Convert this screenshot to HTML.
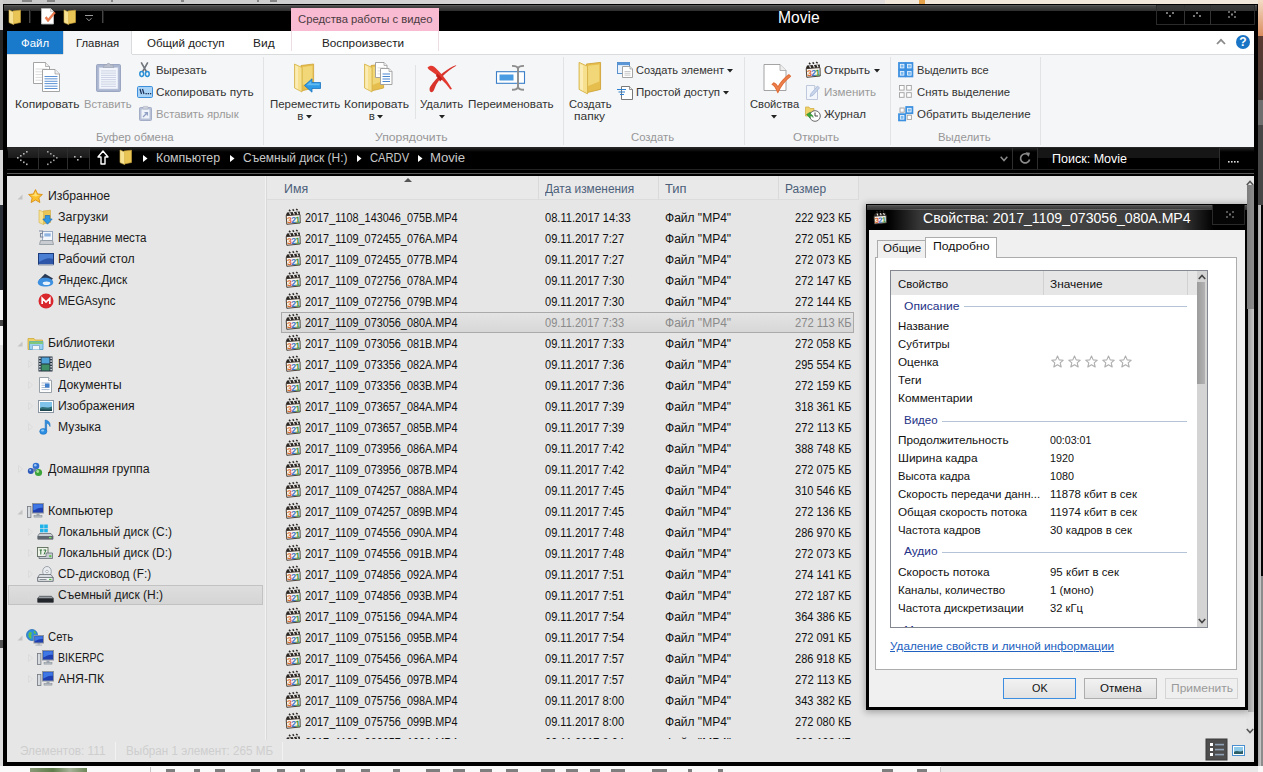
<!DOCTYPE html>
<html lang="ru"><head><meta charset="utf-8"><title>Movie</title>
<style>
html,body{margin:0;padding:0}
body{width:1263px;height:772px;overflow:hidden;position:relative;background:#e6e6e6;font-family:"Liberation Sans", sans-serif;font-size:12px}
div,svg,span.t{position:absolute;box-sizing:border-box}
span.t{white-space:pre;transform-origin:0 50%}
svg{overflow:visible}
svg text{font-family:"Liberation Sans", sans-serif}
</style></head><body>
<div style="left:0px;top:0px;width:885px;height:5px;background:linear-gradient(90deg,#c8c8c8,#d6d4d4 60%,#e2dcdc)"></div>
<div style="left:885px;top:0px;width:378px;height:5px;background:#f1e7da"></div>
<div style="left:919px;top:0px;width:6px;height:4px;background:#e6a24a"></div>
<div style="left:1258px;top:0px;width:5px;height:36px;background:linear-gradient(#f3dcc6,#d98d5e)"></div>
<div style="left:1258px;top:36px;width:5px;height:64px;background:linear-gradient(#5a3a30,#453a36)"></div>
<div style="left:1258px;top:100px;width:5px;height:25px;background:#6e6e6e"></div>
<div style="left:1258px;top:125px;width:5px;height:80px;background:#464646"></div>
<div style="left:1258px;top:205px;width:5px;height:567px;background:#050505"></div>
<div style="left:1258px;top:205px;width:3px;height:561px;background:linear-gradient(90deg,#a8a8a8,#cacaca)"></div>
<div style="left:1261px;top:576px;width:2px;height:196px;background:#8c8c8c"></div>
<div style="left:0px;top:0px;width:3px;height:30px;background:#cfcfcf"></div>
<div style="left:0px;top:30px;width:3px;height:120px;background:#262626"></div>
<div style="left:0px;top:150px;width:3px;height:55px;background:#d8d8d8"></div>
<div style="left:0px;top:205px;width:3px;height:85px;background:#2c3038"></div>
<div style="left:0px;top:290px;width:3px;height:55px;background:#f2f2f2"></div>
<div style="left:0px;top:320px;width:3px;height:6px;background:#444"></div>
<div style="left:0px;top:345px;width:3px;height:427px;background:#dedede"></div>
<div style="left:0px;top:640px;width:3px;height:8px;background:#555"></div>
<div style="left:0px;top:766px;width:1263px;height:6px;background:#fafafa"></div>
<div style="left:941px;top:766px;width:317px;height:6px;background:#e9e9e9"></div>
<div style="left:30px;top:768px;width:57px;height:4px;background:linear-gradient(90deg,#8a9a78,#5f7d4a 40%,#a8b39a 70%,#6c8656)"></div>
<div style="left:150px;top:767px;width:1px;height:5px;background:#c4c4c4"></div>
<div style="left:940px;top:767px;width:1px;height:5px;background:#c4c4c4"></div>
<div style="left:166px;top:769px;width:9px;height:3px;background:#555;opacity:0.75"></div>
<div style="left:194px;top:769px;width:6px;height:3px;background:#555;opacity:0.75"></div>
<div style="left:215px;top:769px;width:10px;height:3px;background:#555;opacity:0.75"></div>
<div style="left:251px;top:769px;width:9px;height:3px;background:#555;opacity:0.75"></div>
<div style="left:277px;top:769px;width:8px;height:3px;background:#555;opacity:0.75"></div>
<div style="left:300px;top:769px;width:5px;height:3px;background:#555;opacity:0.75"></div>
<div style="left:336px;top:769px;width:9px;height:3px;background:#555;opacity:0.75"></div>
<div style="left:361px;top:769px;width:9px;height:3px;background:#555;opacity:0.75"></div>
<div style="left:393px;top:769px;width:7px;height:3px;background:#555;opacity:0.75"></div>
<div style="left:426px;top:769px;width:14px;height:3px;background:#555;opacity:0.75"></div>
<div style="left:453px;top:769px;width:12px;height:3px;background:#555;opacity:0.75"></div>
<div style="left:480px;top:769px;width:12px;height:3px;background:#555;opacity:0.75"></div>
<div style="left:506px;top:769px;width:12px;height:3px;background:#555;opacity:0.75"></div>
<div style="left:541px;top:769px;width:14px;height:3px;background:#555;opacity:0.75"></div>
<div style="left:566px;top:769px;width:12px;height:3px;background:#555;opacity:0.75"></div>
<div style="left:590px;top:769px;width:10px;height:3px;background:#555;opacity:0.75"></div>
<div style="left:611px;top:769px;width:14px;height:3px;background:#555;opacity:0.75"></div>
<div style="left:652px;top:769px;width:15px;height:3px;background:#555;opacity:0.75"></div>
<div style="left:688px;top:769px;width:4px;height:3px;background:#555;opacity:0.75"></div>
<div style="left:718px;top:769px;width:5px;height:3px;background:#555;opacity:0.75"></div>
<div style="left:882px;top:769px;width:11px;height:3px;background:#555;opacity:0.75"></div>
<div style="left:917px;top:769px;width:10px;height:3px;background:#555;opacity:0.75"></div>
<div style="left:22px;top:0px;width:10px;height:2px;background:#666;opacity:0.7"></div>
<div style="left:47px;top:0px;width:8px;height:2px;background:#666;opacity:0.7"></div>
<div style="left:111px;top:0px;width:2px;height:2px;background:#666;opacity:0.7"></div>
<div style="left:181px;top:0px;width:3px;height:2px;background:#666;opacity:0.7"></div>
<div style="left:257px;top:0px;width:2px;height:2px;background:#666;opacity:0.7"></div>
<div style="left:270px;top:0px;width:7px;height:2px;background:#666;opacity:0.7"></div>
<div style="left:3px;top:4px;width:1255px;height:762px;background:#000"></div>
<div style="left:4px;top:5px;width:1253px;height:6px;background:linear-gradient(#484848,#2e2e2e);border-top:1px solid #5a5a5a"></div>
<div style="left:1156px;top:5px;width:99px;height:20px;background:linear-gradient(#3c3c3c 0,#333 30%,#000 32%,#000 100%);border:1px solid #2b2b2b;border-top:0"></div>
<div style="left:1184px;top:5px;width:1px;height:20px;background:#333"></div>
<div style="left:1210px;top:5px;width:1px;height:20px;background:#333"></div>
<svg style="left:1166px;top:12px;" width="8" height="5" viewBox="0 0 8 5"><rect x="0" y="0" width="2" height="2" fill="#777"/><rect x="6" y="0" width="2" height="2" fill="#777"/><rect x="3" y="3" width="2" height="2" fill="#777"/></svg>
<svg style="left:1193px;top:12px;" width="8" height="5" viewBox="0 0 8 5"><rect x="3" y="0" width="2" height="2" fill="#777"/><rect x="0" y="3" width="2" height="2" fill="#777"/><rect x="6" y="3" width="2" height="2" fill="#777"/></svg>
<svg style="left:1228px;top:11px;" width="8" height="7" viewBox="0 0 8 7"><rect x="0" y="0" width="2" height="2" fill="#666"/><rect x="6" y="0" width="2" height="2" fill="#666"/><rect x="3" y="2.5" width="2" height="2" fill="#888"/><rect x="0" y="5" width="2" height="2" fill="#666"/><rect x="6" y="5" width="2" height="2" fill="#666"/></svg>
<span class="t" style="left:778.20px;top:7px;font-size:16px;line-height:22px;color:#fff;transform:scaleX(0.9745);">Movie</span>
<svg style="left:7.5px;top:9px;" width="14" height="16" viewBox="0 0 14 16"><path d="M5 2 L12.5 1.2 L12.5 13.5 L5 15Z" fill="#e9c556" stroke="#cfa63a" stroke-width="0.6"/><path d="M1 1 L5.6 3 L5.6 15.6 L1 13.6Z" fill="#f6e292" stroke="#d6b248" stroke-width="0.6"/></svg>
<div style="left:29px;top:10px;width:2px;height:13px;background:#1e1e1e;border-left:1px solid #444"></div>
<svg style="left:41px;top:8px;" width="15" height="17" viewBox="0 0 15 17"><path d="M0.5 0.5 H9.5 L12.5 3.5 V16.0 H0.5Z" fill="#fff" stroke="#bbb" stroke-width="0.9"/><path d="M9.5 0.5 V3.5 H12.5" fill="#eee" stroke="#bbb" stroke-width="0.7"/><path d="M4 10 L7 14 L14.5 5 L13 3.8 L7.2 10.8 L5.5 8.6Z" fill="#ee7b4d" stroke="#d3602f" stroke-width="0.4"/></svg>
<svg style="left:62.5px;top:9px;" width="14" height="16" viewBox="0 0 14 16"><path d="M5 2 L12.5 1.2 L12.5 13.5 L5 15Z" fill="#e9c556" stroke="#cfa63a" stroke-width="0.6"/><path d="M1 1 L5.6 3 L5.6 15.6 L1 13.6Z" fill="#f6e292" stroke="#d6b248" stroke-width="0.6"/></svg>
<svg style="left:85px;top:15px;" width="8" height="7" viewBox="0 0 8 7"><rect x="0" y="0" width="8" height="1" fill="#9a9a9a"/><path d="M1.5 3.2 L4 5.8 L6.5 3.2" fill="none" stroke="#9a9a9a" stroke-width="1"/></svg>
<div style="left:102px;top:10px;width:2px;height:13px;background:#1e1e1e;border-left:1px solid #444"></div>
<div style="left:7px;top:31px;width:1247px;height:23px;background:#fff"></div>
<div style="left:7px;top:31px;width:56px;height:23px;background:#1979ca"></div>
<span class="t" style="left:20.50px;top:34px;font-size:11.5px;line-height:18px;color:#fff;transform:scaleX(0.9936);">Файл</span>
<div style="left:63px;top:31px;width:69px;height:24px;background:#f5f6f7;border:1px solid #dadbdc;border-bottom:0;border-top:0"></div>
<span class="t" style="left:76.20px;top:34px;font-size:11.5px;line-height:18px;color:#222;transform:scaleX(0.9844);">Главная</span>
<span class="t" style="left:146.70px;top:34px;font-size:11.5px;line-height:18px;color:#222;transform:scaleX(1.0043);">Общий доступ</span>
<span class="t" style="left:253.20px;top:34px;font-size:11.5px;line-height:18px;color:#222;transform:scaleX(1.0378);">Вид</span>
<div style="left:291px;top:8px;width:148px;height:23px;background:#f8bbd2"></div>
<span class="t" style="left:297.70px;top:10px;font-size:11.5px;line-height:18px;color:#4a3a40;transform:scaleX(0.9798);">Средства работы с видео</span>
<div style="left:291px;top:31px;width:1px;height:20px;background:#ecdde3"></div>
<div style="left:438px;top:31px;width:1px;height:20px;background:#ecdde3"></div>
<span class="t" style="left:322.20px;top:34px;font-size:11.5px;line-height:18px;color:#222;transform:scaleX(1.0217);">Воспроизвести</span>
<svg style="left:1216px;top:38px;" width="10" height="7" viewBox="0 0 10 7"><path d="M1 6 L5 1.8 L9 6" fill="none" stroke="#8a8a8a" stroke-width="1.8"/></svg>
<svg style="left:1236px;top:35px;" width="14" height="14" viewBox="0 0 14 14"><circle cx="7" cy="7" r="7" fill="#1a74c6"/><text x="7" y="11.2" font-size="12" font-weight="bold" text-anchor="middle" fill="#fff">?</text></svg>
<div style="left:7px;top:54px;width:1247px;height:93px;background:#f5f6f7;border-top:1px solid #dadbdc"></div>
<div style="left:63px;top:54px;width:69px;height:1px;background:#f5f6f7"></div>
<div style="left:263px;top:57px;width:1px;height:88px;background:#e2e3e4"></div>
<div style="left:563px;top:57px;width:1px;height:88px;background:#e2e3e4"></div>
<div style="left:744px;top:57px;width:1px;height:88px;background:#e2e3e4"></div>
<div style="left:890px;top:57px;width:1px;height:88px;background:#e2e3e4"></div>
<div style="left:1040px;top:57px;width:1px;height:88px;background:#e2e3e4"></div>
<div style="left:415px;top:65px;width:1px;height:54px;background:#e2e3e4"></div>
<svg style="left:33px;top:62px;" width="28" height="30" viewBox="0 0 28 30"><path d="M0.5 0.5 H12.5 L16.5 4.5 V21.5 H0.5Z" fill="#fff" stroke="#9a9a9a" stroke-width="0.9"/><path d="M12.5 0.5 V4.5 H16.5" fill="#eee" stroke="#9a9a9a" stroke-width="0.7"/><rect x="2.5" y="6.5" width="12" height="1" fill="#dcdcdc"/><rect x="2.5" y="9.3" width="12" height="1" fill="#dcdcdc"/><rect x="2.5" y="12.1" width="12" height="1" fill="#dcdcdc"/><rect x="2.5" y="14.9" width="12" height="1" fill="#dcdcdc"/><rect x="2.5" y="17.7" width="12" height="1" fill="#dcdcdc"/><path d="M9.5 7.5 H22.0 L26.5 12.0 V29.5 H9.5Z" fill="#fff" stroke="#9a9a9a" stroke-width="0.9"/><path d="M22.0 7.5 V12.0 H26.5" fill="#eee" stroke="#9a9a9a" stroke-width="0.7"/><rect x="11.5" y="14.0" width="13" height="0.9" fill="#4a86cf"/><rect x="11.5" y="16.4" width="13" height="0.9" fill="#4a86cf"/><rect x="11.5" y="18.8" width="13" height="0.9" fill="#4a86cf"/><rect x="11.5" y="21.2" width="13" height="0.9" fill="#4a86cf"/><rect x="11.5" y="23.7" width="13" height="0.9" fill="#4a86cf"/><rect x="11.5" y="26.1" width="13" height="0.9" fill="#4a86cf"/></svg>
<span class="t" style="left:14.70px;top:95px;font-size:11.5px;line-height:18px;color:#333;transform:scaleX(1.0433);">Копировать</span>
<svg style="left:96px;top:62px;" width="25" height="30" viewBox="0 0 25 30"><rect x="0.5" y="2.5" width="24" height="27" rx="1.2" fill="#aab5cf" stroke="#9aa6c2"/><rect x="3" y="5.5" width="19" height="21.5" fill="#f2f5fb" stroke="#c5cde0" stroke-width="0.6"/><path d="M7 5.5 L8.5 2.8 H10.8 C11 0.8 14 0.8 14.2 2.8 H16.5 L18 5.5Z" fill="#b9bfcc" stroke="#9aa1b2" stroke-width="0.6"/><rect x="5" y="8.5" width="15" height="0.8" fill="#c3cbe0"/><rect x="5" y="10.7" width="15" height="0.8" fill="#c3cbe0"/><rect x="5" y="12.9" width="15" height="0.8" fill="#c3cbe0"/><rect x="5" y="15.1" width="15" height="0.8" fill="#c3cbe0"/><rect x="5" y="17.3" width="15" height="0.8" fill="#c3cbe0"/><rect x="5" y="19.5" width="15" height="0.8" fill="#c3cbe0"/><rect x="5" y="21.7" width="15" height="0.8" fill="#c3cbe0"/><rect x="5" y="23.9" width="15" height="0.8" fill="#c3cbe0"/></svg>
<span class="t" style="left:83.70px;top:95px;font-size:11.5px;line-height:18px;color:#9a9a9a;transform:scaleX(0.9764);">Вставить</span>
<svg style="left:139px;top:62px;" width="11" height="15" viewBox="0 0 11 15"><path d="M2.2 0.3 L7.6 10 M8.8 0.3 L3.4 10" stroke="#70757e" stroke-width="1.6" fill="none"/><ellipse cx="2.7" cy="12" rx="1.9" ry="2.4" fill="none" stroke="#2b8fd6" stroke-width="1.5"/><ellipse cx="8.3" cy="12" rx="1.9" ry="2.4" fill="none" stroke="#2b8fd6" stroke-width="1.5"/></svg>
<span class="t" style="left:156.20px;top:61px;font-size:11.5px;line-height:18px;color:#333;transform:scaleX(0.9891);">Вырезать</span>
<svg style="left:137px;top:86px;" width="16" height="12" viewBox="0 0 16 12"><rect x="0.5" y="0.5" width="15" height="11" rx="1.2" fill="#a9d3f7" stroke="#3d8fdc"/><path d="M3 3 L4.5 8 M5.5 3 L7 8" stroke="#1c2f55" stroke-width="1.2"/><rect x="8.5" y="7" width="1.3" height="1.3" fill="#1c2f55"/><rect x="10.7" y="7" width="1.3" height="1.3" fill="#1c2f55"/><rect x="12.9" y="7" width="1.3" height="1.3" fill="#1c2f55"/></svg>
<span class="t" style="left:156.20px;top:83px;font-size:11.5px;line-height:18px;color:#333;transform:scaleX(1.0260);">Скопировать путь</span>
<svg style="left:139px;top:106px;" width="13" height="15" viewBox="0 0 13 15"><rect x="0.5" y="1.5" width="12" height="13" rx="1" fill="#b7c0d6" stroke="#a3adc6"/><rect x="2.5" y="3.5" width="8" height="9" fill="#f0f3fa"/><rect x="4" y="0.4" width="5" height="2.6" rx="0.7" fill="#cfd3dd" stroke="#a9afbe" stroke-width="0.6"/><path d="M4 11 L8 7 M5.5 6.6 H8.4 V9.5" stroke="#8fa0c4" stroke-width="1.3" fill="none"/></svg>
<span class="t" style="left:156.20px;top:105px;font-size:11.5px;line-height:18px;color:#9a9a9a;transform:scaleX(0.9811);">Вставить ярлык</span>
<span class="t" style="left:95.70px;top:128px;font-size:11.5px;line-height:18px;color:#979797;transform:scaleX(0.9929);">Буфер обмена</span>
<svg style="left:290px;top:61px;" width="32" height="32" viewBox="0 0 32 32"><path d="M11 4.5 L23.6 3 L23.6 27 L11 30Z" fill="#e6be4e" stroke="#cfa43a" stroke-width="0.8"/><path d="M12.5 6 L22.5 4.8 L22.5 20 L12.5 24Z" fill="#f1d778"/><path d="M4.5 3 L12 6.5 L12 31 L4.5 27Z" fill="#f6e08e" stroke="#d6b248" stroke-width="0.8"/><path d="M5.3 4.5 L8 5.8 L8 28.2 L5.3 26.6Z" fill="#faecb4"/></svg>
<svg style="left:304px;top:78px;" width="17" height="15" viewBox="0 0 17 15"><path d="M0.5 7.5 L8 0.8 L8 4.5 L16.5 4.5 L16.5 10.5 L8 10.5 L8 14.2Z" fill="#2f9be6" stroke="#1b73c0" stroke-width="0.8"/><path d="M2.5 7.3 L7.2 3 L7.2 5.5 L15.5 5.5 L15.5 7.3Z" fill="#63bbf3"/></svg>
<span class="t" style="left:269.70px;top:95px;font-size:11.5px;line-height:18px;color:#333;transform:scaleX(0.9948);">Переместить</span>
<span class="t" style="left:297.20px;top:107px;font-size:11.5px;line-height:18px;color:#333;">в</span>
<svg style="left:306px;top:115px;" width="6" height="4" viewBox="0 0 6 4"><path d="M0 0 H6 L3 3.5Z" fill="#222"/></svg>
<svg style="left:360px;top:61px;" width="32" height="32" viewBox="0 0 32 32"><path d="M11 4.5 L23.6 3 L23.6 27 L11 30Z" fill="#e6be4e" stroke="#cfa43a" stroke-width="0.8"/><path d="M12.5 6 L22.5 4.8 L22.5 20 L12.5 24Z" fill="#f1d778"/><path d="M4.5 3 L12 6.5 L12 31 L4.5 27Z" fill="#f6e08e" stroke="#d6b248" stroke-width="0.8"/><path d="M5.3 4.5 L8 5.8 L8 28.2 L5.3 26.6Z" fill="#faecb4"/></svg>
<svg style="left:375px;top:62px;" width="18" height="23" viewBox="0 0 18 23"><path d="M0.5 0.5 H9.0 L12.0 3.5 V15.5 H0.5Z" fill="#fff" stroke="#9a9a9a" stroke-width="0.9"/><path d="M9.0 0.5 V3.5 H12.0" fill="#eee" stroke="#9a9a9a" stroke-width="0.7"/><rect x="2.5" y="5.5" width="7.5" height="0.8" fill="#d4d4d4"/><rect x="2.5" y="8.5" width="7.5" height="0.8" fill="#d4d4d4"/><rect x="2.5" y="11.5" width="7.5" height="0.8" fill="#d4d4d4"/><path d="M5.5 6.5 H14.0 L17.0 9.5 V22.5 H5.5Z" fill="#fff" stroke="#9a9a9a" stroke-width="0.9"/><path d="M14.0 6.5 V9.5 H17.0" fill="#eee" stroke="#9a9a9a" stroke-width="0.7"/><rect x="7.5" y="11.5" width="7.5" height="1" fill="#4a86cf"/><rect x="7.5" y="14.0" width="7.5" height="1" fill="#4a86cf"/><rect x="7.5" y="16.5" width="7.5" height="1" fill="#4a86cf"/><rect x="7.5" y="19.0" width="7.5" height="1" fill="#4a86cf"/></svg>
<span class="t" style="left:343.70px;top:95px;font-size:11.5px;line-height:18px;color:#333;transform:scaleX(1.0513);">Копировать</span>
<span class="t" style="left:368.70px;top:107px;font-size:11.5px;line-height:18px;color:#333;">в</span>
<svg style="left:377px;top:115px;" width="6" height="4" viewBox="0 0 6 4"><path d="M0 0 H6 L3 3.5Z" fill="#222"/></svg>
<svg style="left:427px;top:64.5px;" width="30" height="28" viewBox="0 0 30 28"><path d="M29 0.3 C22 2.5 10 11 3 22 C2 24.5 2.5 27 4.5 27.3 C6.5 27 7 25 8 22.5 C11 15 19 6.5 29.3 0.8Z" fill="#d8342c"/><path d="M0.5 2.5 C3 0.3 5 0.3 7.5 2 C13 7 20 15 25 24 L23.3 24.6 C18 17 11 10.5 4 6 C2.5 5 1 4 0.5 2.5Z" fill="#e23a30"/><path d="M10 8.5 C12 10 14 12 15.5 14 L13 16.5 C12 14.5 10.5 12.5 9 11Z" fill="#c41f1a"/></svg>
<span class="t" style="left:420.20px;top:95px;font-size:11.5px;line-height:18px;color:#333;transform:scaleX(0.9816);">Удалить</span>
<svg style="left:439px;top:115px;" width="6" height="4" viewBox="0 0 6 4"><path d="M0 0 H6 L3 3.5Z" fill="#222"/></svg>
<svg style="left:495.5px;top:64.5px;" width="30" height="26" viewBox="0 0 30 26"><rect x="0.5" y="6.7" width="28" height="11.6" fill="#fff" stroke="#3a7fc8" stroke-width="1.1"/><rect x="3.5" y="9.5" width="14" height="6" fill="#4a9ce2"/><path d="M16 0.9 C19.5 0.9 22 1.8 22 4 V21.5 C22 23.8 19.5 24.8 16 24.8 M28 0.9 C24.5 0.9 22 1.8 22 4 M22 21.5 C22 23.8 24.5 24.8 28 24.8" fill="none" stroke="#8d8d8d" stroke-width="1.9"/></svg>
<span class="t" style="left:467.70px;top:95px;font-size:11.5px;line-height:18px;color:#333;transform:scaleX(1.0153);">Переименовать</span>
<span class="t" style="left:375.20px;top:128px;font-size:11.5px;line-height:18px;color:#979797;transform:scaleX(1.0608);">Упорядочить</span>
<svg style="left:573.8px;top:58.7px;" width="36" height="36" viewBox="0 0 32 32"><path d="M11 4.5 L23.6 3 L23.6 27 L11 30Z" fill="#e6be4e" stroke="#cfa43a" stroke-width="0.8"/><path d="M12.5 6 L22.5 4.8 L22.5 20 L12.5 24Z" fill="#f1d778"/><path d="M4.5 3 L12 6.5 L12 31 L4.5 27Z" fill="#f6e08e" stroke="#d6b248" stroke-width="0.8"/><path d="M5.3 4.5 L8 5.8 L8 28.2 L5.3 26.6Z" fill="#faecb4"/></svg>
<span class="t" style="left:568.70px;top:95px;font-size:11.5px;line-height:18px;color:#333;transform:scaleX(0.9744);">Создать</span>
<span class="t" style="left:574.20px;top:107px;font-size:11.5px;line-height:18px;color:#333;transform:scaleX(1.0448);">папку</span>
<svg style="left:617px;top:62px;" width="16" height="16" viewBox="0 0 16 16"><rect x="0.5" y="0.5" width="12" height="11" fill="#eaf2fb" stroke="#4a86c7" stroke-width="0.9"/><rect x="0.5" y="0.5" width="12" height="2.6" fill="#5b96d6"/><path d="M5.5 4.5 H13.0 L15.5 7.0 V15.5 H5.5Z" fill="#fff" stroke="#9a9a9a" stroke-width="0.9"/><path d="M13.0 4.5 V7.0 H15.5" fill="#eee" stroke="#9a9a9a" stroke-width="0.7"/><rect x="7.5" y="9.0" width="6" height="0.8" fill="#bbb"/><rect x="7.5" y="10.8" width="6" height="0.8" fill="#bbb"/><rect x="7.5" y="12.7" width="6" height="0.8" fill="#bbb"/></svg>
<span class="t" style="left:636.20px;top:61px;font-size:11.5px;line-height:18px;color:#333;transform:scaleX(0.9623);">Создать элемент</span>
<svg style="left:727px;top:69px;" width="6" height="4" viewBox="0 0 6 4"><path d="M0 0 H6 L3 3.5Z" fill="#222"/></svg>
<svg style="left:617px;top:84px;" width="16" height="16" viewBox="0 0 16 16"><path d="M4.5 2.5 H12.5 L15.5 5.5 V15.5 H4.5Z" fill="#fff" stroke="#6a6a6a" stroke-width="0.9"/><path d="M12.5 2.5 V5.5 H15.5" fill="#eee" stroke="#6a6a6a" stroke-width="0.7"/><path d="M0 5.5 H9 M1.5 8 H8 M3 10.5 H7" stroke="#2d7fd0" stroke-width="1.1"/></svg>
<span class="t" style="left:636.20px;top:83px;font-size:11.5px;line-height:18px;color:#333;transform:scaleX(0.9988);">Простой доступ</span>
<svg style="left:723px;top:91px;" width="6" height="4" viewBox="0 0 6 4"><path d="M0 0 H6 L3 3.5Z" fill="#222"/></svg>
<span class="t" style="left:630.70px;top:128px;font-size:11.5px;line-height:18px;color:#979797;transform:scaleX(0.9858);">Создать</span>
<svg style="left:763px;top:63px;" width="29" height="31" viewBox="0 0 29 31"><path d="M1 1.5 H17 L23 7.5 V27.5 H1Z" fill="#fff" stroke="#9a9a9a" stroke-width="0.9"/><path d="M17 1.5 V7.5 H23" fill="#eee" stroke="#9a9a9a" stroke-width="0.7"/><path d="M9.2 21.5 C11 22 13 25 14.8 29.6 C18 22 22.5 17 27.5 13.2 L25.8 11.8 C21 15.5 17.5 19.5 15 24 C13.8 21.8 12.3 20.2 10.8 19.8Z" fill="#f0834f" stroke="#e06f3a" stroke-width="1.2" stroke-linejoin="round"/></svg>
<span class="t" style="left:750.20px;top:95px;font-size:11.5px;line-height:18px;color:#333;transform:scaleX(0.9723);">Свойства</span>
<svg style="left:771px;top:115px;" width="6" height="4" viewBox="0 0 6 4"><path d="M0 0 H6 L3 3.5Z" fill="#222"/></svg>
<svg style="left:805px;top:62px;" width="16" height="16" viewBox="0 0 16 16"><path d="M1.2 6.6 L15 5.6 L15.2 14 L1.8 15.3Z" fill="#f7f3ee" stroke="#4a4038" stroke-width="1"/><path d="M0.8 6.6 L2 3.4 L14.8 2.6 L15 5.4Z" fill="#2c2723"/><path d="M4 0.9 L5.4 2.2 M7.6 0.4 L9 1.7 M11.2 0 L12.6 1.3" stroke="#2c2723" stroke-width="1.5"/><path d="M4.5 3.4 L5.6 5.8 M8.3 3.1 L9.4 5.5 M12 2.9 L13.1 5.3" stroke="#efefef" stroke-width="1.2"/><text x="2" y="13.9" font-size="8.6" font-weight="bold" fill="#d8602a" transform="rotate(-3 8 10)">3</text><text x="6.2" y="13.9" font-size="8.6" font-weight="bold" fill="#3a72c8" transform="rotate(-3 8 10)">2</text><text x="10.2" y="13.9" font-size="8.6" font-weight="bold" fill="#3f8f35" transform="rotate(-3 8 10)">1</text></svg>
<span class="t" style="left:824.20px;top:61px;font-size:11.5px;line-height:18px;color:#333;transform:scaleX(1.0205);">Открыть</span>
<svg style="left:874px;top:69px;" width="6" height="4" viewBox="0 0 6 4"><path d="M0 0 H6 L3 3.5Z" fill="#222"/></svg>
<svg style="left:806px;top:84px;" width="14" height="16" viewBox="0 0 14 16"><path d="M0.5 1.5 H8.5 L11.5 4.5 V15.5 H0.5Z" fill="#f3f6fb" stroke="#b9c3d8" stroke-width="0.9"/><path d="M8.5 1.5 V4.5 H11.5" fill="#eee" stroke="#b9c3d8" stroke-width="0.7"/><path d="M4 12.5 L5 9.5 L11.5 2 L13.5 3.8 L7 11.3Z" fill="#c8d4ea" stroke="#9fb1d3" stroke-width="0.7"/></svg>
<span class="t" style="left:824.20px;top:83px;font-size:11.5px;line-height:18px;color:#9a9a9a;transform:scaleX(1.0043);">Изменить</span>
<svg style="left:805px;top:106px;" width="16" height="16" viewBox="0 0 16 16"><path d="M0.5 1 L4 1 L5 2.5 L9 2.5 L9 10 L0.5 10Z" fill="#efd36a" stroke="#cfa93d" stroke-width="0.7"/><circle cx="10" cy="10" r="5.3" fill="#fff" stroke="#6b6b6b" stroke-width="1"/><path d="M10 6.5 V10 H13" stroke="#444" stroke-width="1" fill="none"/><path d="M1.5 8.5 L5.5 6 L5.2 8.2 C7 8.3 8.2 9.6 8.2 11.5 C7.4 10.3 6.5 10 5.1 10.1 L5.3 12.3Z" fill="#3aa83a" stroke="#2a7f2a" stroke-width="0.5"/></svg>
<span class="t" style="left:824.20px;top:105px;font-size:11.5px;line-height:18px;color:#333;transform:scaleX(1.0031);">Журнал</span>
<span class="t" style="left:793.20px;top:128px;font-size:11.5px;line-height:18px;color:#979797;transform:scaleX(1.0205);">Открыть</span>
<svg style="left:898px;top:62px;" width="16" height="16" viewBox="0 0 16 16"><rect x="1" y="1" width="6.2" height="6.2" fill="#fff" stroke="#3c90e0" stroke-width="1.8"/><rect x="2.6" y="2.6" width="3" height="3" fill="#7ab8f0"/><rect x="1" y="8.2" width="6.2" height="6.2" fill="#fff" stroke="#3c90e0" stroke-width="1.8"/><rect x="2.6" y="9.799999999999999" width="3" height="3" fill="#7ab8f0"/><rect x="8.2" y="1" width="6.2" height="6.2" fill="#fff" stroke="#3c90e0" stroke-width="1.8"/><rect x="9.799999999999999" y="2.6" width="3" height="3" fill="#7ab8f0"/><rect x="8.2" y="8.2" width="6.2" height="6.2" fill="#fff" stroke="#3c90e0" stroke-width="1.8"/><rect x="9.799999999999999" y="9.799999999999999" width="3" height="3" fill="#7ab8f0"/></svg>
<span class="t" style="left:916.70px;top:61px;font-size:11.5px;line-height:18px;color:#333;transform:scaleX(0.9627);">Выделить все</span>
<svg style="left:898px;top:84px;" width="16" height="16" viewBox="0 0 16 16"><rect x="1.5" y="1.5" width="4.6" height="4.6" fill="#fff" stroke="#a0a0a0" stroke-width="0.9"/><rect x="1.5" y="8.7" width="4.6" height="4.6" fill="#fff" stroke="#a0a0a0" stroke-width="0.9"/><rect x="8.7" y="1.5" width="4.6" height="4.6" fill="#fff" stroke="#a0a0a0" stroke-width="0.9"/><rect x="8.7" y="8.7" width="4.6" height="4.6" fill="#fff" stroke="#a0a0a0" stroke-width="0.9"/></svg>
<span class="t" style="left:916.70px;top:83px;font-size:11.5px;line-height:18px;color:#333;transform:scaleX(0.9829);">Снять выделение</span>
<svg style="left:898px;top:106px;" width="16" height="16" viewBox="0 0 16 16"><rect x="2" y="2" width="4.2" height="4.2" fill="#fff" stroke="#a0a0a0" stroke-width="0.9"/><rect x="8.2" y="1" width="6.2" height="6.2" fill="#fff" stroke="#3c90e0" stroke-width="1.8"/><rect x="9.799999999999999" y="2.6" width="3" height="3" fill="#7ab8f0"/><rect x="1" y="8.2" width="6.2" height="6.2" fill="#fff" stroke="#3c90e0" stroke-width="1.8"/><rect x="2.6" y="9.799999999999999" width="3" height="3" fill="#7ab8f0"/><rect x="9.2" y="9.2" width="4.2" height="4.2" fill="#fff" stroke="#a0a0a0" stroke-width="0.9"/></svg>
<span class="t" style="left:916.70px;top:105px;font-size:11.5px;line-height:18px;color:#333;transform:scaleX(1.0001);">Обратить выделение</span>
<span class="t" style="left:938.20px;top:128px;font-size:11.5px;line-height:18px;color:#979797;transform:scaleX(0.9913);">Выделить</span>
<div style="left:7px;top:147px;width:1247px;height:29px;background:#000"></div>
<div style="left:7px;top:147px;width:1247px;height:5px;background:linear-gradient(#2a2a2a,#000)"></div>
<div style="left:8px;top:148px;width:81px;height:10px;background:linear-gradient(#2a2a2a,#1a1a1a)"></div>
<div style="left:7px;top:169px;width:1247px;height:1px;background:#222"></div>
<div style="left:1038px;top:148px;width:181px;height:10px;background:#161616"></div>
<div style="left:7px;top:173px;width:1247px;height:1px;background:#5a5a5a"></div>
<div style="left:38px;top:148px;width:1px;height:21px;background:#2e2e2e"></div>
<div style="left:67px;top:148px;width:1px;height:21px;background:#2e2e2e"></div>
<div style="left:89px;top:148px;width:1px;height:21px;background:#2e2e2e"></div>
<div style="left:1012px;top:148px;width:1px;height:21px;background:#2e2e2e"></div>
<div style="left:1037px;top:148px;width:1px;height:21px;background:#2e2e2e"></div>
<div style="left:1219px;top:148px;width:1px;height:21px;background:#2e2e2e"></div>
<svg style="left:17px;top:151px;" width="13" height="15" viewBox="0 0 13 15"><rect x="9" y="0" width="1.6" height="1.6" fill="#b4b4b4"/><rect x="6" y="2" width="1.6" height="1.6" fill="#b4b4b4"/><rect x="3" y="4" width="1.6" height="1.6" fill="#b4b4b4"/><rect x="0" y="6" width="1.6" height="1.6" fill="#b4b4b4"/><rect x="3" y="8.5" width="1.6" height="1.6" fill="#b4b4b4"/><rect x="6" y="10.5" width="1.6" height="1.6" fill="#b4b4b4"/><rect x="9" y="12.5" width="1.6" height="1.6" fill="#b4b4b4"/></svg>
<svg style="left:47px;top:151px;" width="13" height="15" viewBox="0 0 13 15"><rect x="0" y="0" width="1.6" height="1.6" fill="#a0a0a0"/><rect x="3" y="2" width="1.6" height="1.6" fill="#a0a0a0"/><rect x="6" y="4" width="1.6" height="1.6" fill="#a0a0a0"/><rect x="9" y="6" width="1.6" height="1.6" fill="#a0a0a0"/><rect x="6" y="8.5" width="1.6" height="1.6" fill="#a0a0a0"/><rect x="3" y="10.5" width="1.6" height="1.6" fill="#a0a0a0"/><rect x="0" y="12.5" width="1.6" height="1.6" fill="#a0a0a0"/></svg>
<svg style="left:74px;top:156px;" width="10" height="6" viewBox="0 0 10 6"><rect x="0" y="0" width="1.6" height="1.6" fill="#b4b4b4"/><rect x="3" y="3" width="1.6" height="1.6" fill="#b4b4b4"/><rect x="6" y="0" width="1.6" height="1.6" fill="#b4b4b4"/></svg>
<svg style="left:97px;top:150px;" width="12" height="15" viewBox="0 0 12 15"><path d="M6 1 L11 7 H8 V14 H4 V7 H1Z" fill="#000" stroke="#fff" stroke-width="1.4" stroke-linejoin="round"/></svg>
<svg style="left:119px;top:149px;" width="14" height="16" viewBox="0 0 14 16"><path d="M5 2 L12.5 1.2 L12.5 13.5 L5 15Z" fill="#e9c556" stroke="#cfa63a" stroke-width="0.6"/><path d="M1 1 L5.6 3 L5.6 15.6 L1 13.6Z" fill="#f6e292" stroke="#d6b248" stroke-width="0.6"/></svg>
<svg style="left:142.5px;top:155px;" width="5" height="7" viewBox="0 0 5 7"><path d="M0 0 L4.5 3.5 L0 7Z" fill="#fff"/></svg>
<span class="t" style="left:156.20px;top:149px;font-size:12px;line-height:18px;color:#c8c8c8;transform:scaleX(1.0321);">Компьютер</span>
<svg style="left:230px;top:155px;" width="5" height="7" viewBox="0 0 5 7"><path d="M0 0 L4.5 3.5 L0 7Z" fill="#fff"/></svg>
<span class="t" style="left:242.70px;top:149px;font-size:12px;line-height:18px;color:#c8c8c8;transform:scaleX(0.9993);">Съемный диск (H:)</span>
<svg style="left:357px;top:155px;" width="5" height="7" viewBox="0 0 5 7"><path d="M0 0 L4.5 3.5 L0 7Z" fill="#fff"/></svg>
<span class="t" style="left:370.20px;top:149px;font-size:12px;line-height:18px;color:#c8c8c8;transform:scaleX(0.9306);">CARDV</span>
<svg style="left:418px;top:155px;" width="5" height="7" viewBox="0 0 5 7"><path d="M0 0 L4.5 3.5 L0 7Z" fill="#fff"/></svg>
<span class="t" style="left:430.20px;top:149px;font-size:12px;line-height:18px;color:#c8c8c8;transform:scaleX(1.0963);">Movie</span>
<svg style="left:1000px;top:156px;" width="8" height="6" viewBox="0 0 8 6"><path d="M0.7 0.7 L4 4.5 L7.3 0.7" fill="none" stroke="#8a8a8a" stroke-width="1.5"/></svg>
<svg style="left:1019px;top:152px;" width="12" height="13" viewBox="0 0 12 13"><path d="M9.5 3.2 A4.6 4.6 0 1 0 10.6 7.5" fill="none" stroke="#8a8a8a" stroke-width="1.7"/><path d="M6.5 0.2 L11 0.8 L9.8 5Z" fill="#8a8a8a"/></svg>
<span class="t" style="left:1051.70px;top:150px;font-size:12.5px;line-height:18px;color:#fff;transform:scaleX(1.0022);">Поиск: Movie</span>
<svg style="left:1228px;top:161px;" width="12" height="2" viewBox="0 0 12 2"><rect x="0" y="0" width="1.6" height="1.6" fill="#ddd"/><rect x="3" y="0" width="1.6" height="1.6" fill="#ddd"/><rect x="6" y="0" width="1.6" height="1.6" fill="#ddd"/><rect x="9" y="0" width="1.6" height="1.6" fill="#ddd"/></svg>
<div style="left:7px;top:176px;width:1247px;height:586px;background:#e6e6e6"></div>
<div style="left:265px;top:176px;width:1px;height:564px;background:#f2f2f2"></div>
<div style="left:266px;top:176px;width:1px;height:564px;background:#d9d9d9"></div>
<svg style="left:17px;top:194px;" width="6" height="6" viewBox="0 0 6 6"><path d="M5.5 0.5 V5.5 H0.5Z" fill="#c4c4c4"/></svg>
<svg style="left:27.5px;top:189.0px;" width="15" height="14" viewBox="0 0 15 14"><path d="M7.5 0.6 L9.6 5 L14.4 5.5 L10.8 8.8 L11.9 13.5 L7.5 11 L3.1 13.5 L4.2 8.8 L0.6 5.5 L5.4 5Z" fill="#fbc12e" stroke="#d98f14" stroke-width="0.9" stroke-linejoin="round"/><path d="M7.5 2.8 L8.9 5.9 L12 6.3 L7.5 7.5 L3 6.3 L6.1 5.9Z" fill="#ffe27a"/></svg>
<span class="t" style="left:47.70px;top:187px;font-size:12px;line-height:18px;color:#1a1a1a;transform:scaleX(1.0209);">Избранное</span>
<svg style="left:38.0px;top:209.0px;" width="15" height="16" viewBox="0 0 15 16"><path d="M5 2 L12.5 1.2 L12.5 13.5 L5 15Z" fill="#e9c556" stroke="#cfa63a" stroke-width="0.6"/><path d="M1 1 L5.6 3 L5.6 15.6 L1 13.6Z" fill="#f6e292" stroke="#d6b248" stroke-width="0.6"/><path d="M7.2 6.5 H11.8 V10 H14.2 L9.5 15.2 L4.8 10 H7.2Z" fill="#2f96e4" stroke="#1a6fbe" stroke-width="0.7"/></svg>
<span class="t" style="left:57.70px;top:208px;font-size:12px;line-height:18px;color:#1a1a1a;transform:scaleX(1.0373);">Загрузки</span>
<svg style="left:37.5px;top:230.0px;" width="16" height="16" viewBox="0 0 16 16"><rect x="4.5" y="1.5" width="10" height="9" fill="#f4f7fb" stroke="#8ea2bf" stroke-width="0.9"/><rect x="6.3" y="3.3" width="6.4" height="3.2" fill="#8fb4e2"/><path d="M1 1 H4.5 V3.5 H2.5 V7 H5.5" fill="none" stroke="#7d8aa0" stroke-width="1.1"/><path d="M2.5 10.5 H14.5 L15.5 14.5 H1.5Z" fill="#c9cdd2" stroke="#8d949c" stroke-width="0.8"/></svg>
<span class="t" style="left:57.70px;top:229px;font-size:12px;line-height:18px;color:#1a1a1a;transform:scaleX(0.9690);">Недавние места</span>
<svg style="left:37.5px;top:252.5px;" width="16" height="13" viewBox="0 0 16 13"><rect x="0.5" y="0.5" width="15" height="11" fill="#2d55a8" stroke="#1d3a7a"/><path d="M1 1 H15 V6 C10 4 5 7 1 9Z" fill="#4a7fd4"/><rect x="0.5" y="11" width="15" height="1.6" fill="#9aa4b8"/></svg>
<span class="t" style="left:57.70px;top:250px;font-size:12px;line-height:18px;color:#1a1a1a;transform:scaleX(1.0169);">Рабочий стол</span>
<svg style="left:37.0px;top:273.0px;" width="17" height="14" viewBox="0 0 17 14"><path d="M2 7 L8 0.8 L16 5.5 L13 9Z" fill="#2a3a55"/><path d="M0.8 9.5 C0.8 6.5 4 4.8 8 4.8 C12.5 4.8 16.2 6.8 16.2 9.5 C16.2 12.3 12.5 13.6 8.5 13.6 C4 13.6 0.8 12.3 0.8 9.5Z" fill="#3d8fe0"/><ellipse cx="9.5" cy="10.2" rx="3.8" ry="1.8" fill="#e8f2fc"/></svg>
<span class="t" style="left:57.70px;top:271px;font-size:12px;line-height:18px;color:#1a1a1a;transform:scaleX(0.9902);">Яндекс.Диск</span>
<svg style="left:37.5px;top:293.0px;" width="16" height="16" viewBox="0 0 16 16"><circle cx="8" cy="8" r="7.5" fill="#d9272e"/><path d="M4.2 11 V5.2 L8 9 L11.8 5.2 V11" fill="none" stroke="#fff" stroke-width="1.7" stroke-linejoin="miter"/></svg>
<span class="t" style="left:57.70px;top:292px;font-size:12px;line-height:18px;color:#1a1a1a;transform:scaleX(0.9598);">MEGAsync</span>
<svg style="left:17px;top:341px;" width="6" height="6" viewBox="0 0 6 6"><path d="M5.5 0.5 V5.5 H0.5Z" fill="#c4c4c4"/></svg>
<svg style="left:26.5px;top:335.5px;" width="17" height="15" viewBox="0 0 17 15"><path d="M1 2.5 H7 L8.2 4 H15.5 V13.5 H1Z" fill="#f0cf62" stroke="#cfa93d" stroke-width="0.8"/><path d="M2.5 5.5 H16 V13.5 H2.5Z" fill="#9ad0f0" stroke="#4d9fd6" stroke-width="0.8"/><path d="M5.5 13.5 V9.5 H12.5 V13.5" fill="#f3f6f8" stroke="#7aa7c8" stroke-width="0.8"/><path d="M2.5 5.5 H16 V8 H2.5Z" fill="#7fc77a"/></svg>
<span class="t" style="left:47.70px;top:334px;font-size:12px;line-height:18px;color:#1a1a1a;transform:scaleX(1.0244);">Библиотеки</span>
<svg style="left:28px;top:360px;" width="5" height="8" viewBox="0 0 5 8"><path d="M0.5 0.5 L4.5 4 L0.5 7.5Z" fill="none" stroke="#dadada" stroke-width="0.9"/></svg>
<svg style="left:38.0px;top:356.0px;" width="15" height="16" viewBox="0 0 15 16"><rect x="0.5" y="0.5" width="14" height="15" fill="#23303f"/><rect x="3.5" y="1.5" width="8" height="6" fill="#4fa3d8"/><rect x="3.5" y="8.5" width="8" height="6" fill="#3f8f66"/><rect x="1.2" y="1.5" width="1.4" height="1.6" fill="#e8edf2"/><rect x="12.4" y="1.5" width="1.4" height="1.6" fill="#e8edf2"/><rect x="1.2" y="4.3" width="1.4" height="1.6" fill="#e8edf2"/><rect x="12.4" y="4.3" width="1.4" height="1.6" fill="#e8edf2"/><rect x="1.2" y="7.1" width="1.4" height="1.6" fill="#e8edf2"/><rect x="12.4" y="7.1" width="1.4" height="1.6" fill="#e8edf2"/><rect x="1.2" y="9.9" width="1.4" height="1.6" fill="#e8edf2"/><rect x="12.4" y="9.9" width="1.4" height="1.6" fill="#e8edf2"/><rect x="1.2" y="12.7" width="1.4" height="1.6" fill="#e8edf2"/><rect x="12.4" y="12.7" width="1.4" height="1.6" fill="#e8edf2"/></svg>
<span class="t" style="left:57.70px;top:355px;font-size:12px;line-height:18px;color:#1a1a1a;transform:scaleX(0.9583);">Видео</span>
<svg style="left:28px;top:381px;" width="5" height="8" viewBox="0 0 5 8"><path d="M0.5 0.5 L4.5 4 L0.5 7.5Z" fill="none" stroke="#dadada" stroke-width="0.9"/></svg>
<svg style="left:39.0px;top:377.0px;" width="13" height="16" viewBox="0 0 13 16"><path d="M0.5 0.5 H9.5 L12.5 3.5 V15.5 H0.5Z" fill="#fff" stroke="#8f979f" stroke-width="0.9"/><path d="M9.5 0.5 V3.5 H12.5" fill="#eee" stroke="#8f979f" stroke-width="0.7"/><rect x="2.5" y="5.5" width="8" height="0.9" fill="#9fb3cc"/><rect x="2.5" y="7.8" width="8" height="0.9" fill="#9fb3cc"/><rect x="2.5" y="10.0" width="8" height="0.9" fill="#9fb3cc"/><rect x="2.5" y="12.2" width="8" height="0.9" fill="#9fb3cc"/><rect x="6" y="6.5" width="4.5" height="4" fill="#3f7fcc"/></svg>
<span class="t" style="left:57.70px;top:376px;font-size:12px;line-height:18px;color:#1a1a1a;transform:scaleX(1.0281);">Документы</span>
<svg style="left:28px;top:402px;" width="5" height="8" viewBox="0 0 5 8"><path d="M0.5 0.5 L4.5 4 L0.5 7.5Z" fill="none" stroke="#dadada" stroke-width="0.9"/></svg>
<svg style="left:37.5px;top:399.5px;" width="16" height="13" viewBox="0 0 16 13"><rect x="0.5" y="0.5" width="15" height="12" fill="#fff" stroke="#8a96a3"/><rect x="2" y="2" width="12" height="9" fill="#7fc3ea"/><path d="M2 8 C5 5.5 8 9 14 6.5 V11 H2Z" fill="#2f6f77"/><path d="M2 9.5 C6 8.5 10 10.5 14 9 V11 H2Z" fill="#1e4750"/></svg>
<span class="t" style="left:57.70px;top:397px;font-size:12px;line-height:18px;color:#1a1a1a;transform:scaleX(1.0156);">Изображения</span>
<svg style="left:28px;top:423px;" width="5" height="8" viewBox="0 0 5 8"><path d="M0.5 0.5 L4.5 4 L0.5 7.5Z" fill="none" stroke="#dadada" stroke-width="0.9"/></svg>
<svg style="left:39.0px;top:419.0px;" width="13" height="16" viewBox="0 0 13 16"><path d="M6.2 12 V1 C9.5 1.5 11.5 3.5 11 7.5 C10.3 5.2 9 4.4 7.6 4.2 V12" fill="#2d8fe2" stroke="#1d6fc0" stroke-width="0.6"/><ellipse cx="4.3" cy="12.4" rx="3.6" ry="2.9" fill="#2d8fe2" stroke="#1d6fc0" stroke-width="0.6"/><ellipse cx="3.6" cy="11.6" rx="1.6" ry="1" fill="#8fcaf7"/></svg>
<span class="t" style="left:57.70px;top:418px;font-size:12px;line-height:18px;color:#1a1a1a;transform:scaleX(1.0152);">Музыка</span>
<svg style="left:18px;top:465px;" width="5" height="8" viewBox="0 0 5 8"><path d="M0.5 0.5 L4.5 4 L0.5 7.5Z" fill="none" stroke="#dadada" stroke-width="0.9"/></svg>
<svg style="left:27.0px;top:461.5px;" width="16" height="15" viewBox="0 0 16 15"><circle cx="9" cy="4" r="3.3" fill="#2f6fd0"/><circle cx="8.3" cy="3.2" r="1.3" fill="#9cc3f2"/><circle cx="3.8" cy="9" r="3" fill="#2a57b8"/><circle cx="3.2" cy="8.2" r="1.1" fill="#8fb4ea"/><circle cx="11.5" cy="10.5" r="3.6" fill="#3ca43a"/><circle cx="10.7" cy="9.5" r="1.4" fill="#a6e09a"/><circle cx="7.5" cy="8" r="1.8" fill="#6b7fb2"/></svg>
<span class="t" style="left:47.70px;top:460px;font-size:12px;line-height:18px;color:#1a1a1a;transform:scaleX(1.0259);">Домашняя группа</span>
<svg style="left:17px;top:509px;" width="6" height="6" viewBox="0 0 6 6"><path d="M5.5 0.5 V5.5 H0.5Z" fill="#c4c4c4"/></svg>
<svg style="left:26.5px;top:503.0px;" width="17" height="16" viewBox="0 0 17 16"><rect x="0.5" y="3.5" width="3.4" height="11" fill="#d7dbe0" stroke="#70777f" stroke-width="0.8"/><rect x="5.5" y="0.5" width="11" height="9.5" fill="#1f3fb0" stroke="#8e959d" stroke-width="1"/><path d="M6.3 1.3 H15.7 V5 C12 4 9 6.5 6.3 7.5Z" fill="#3f78e4"/><rect x="9.5" y="10.5" width="3" height="2" fill="#9aa2ab"/><rect x="7" y="12.5" width="8" height="1.6" fill="#b9c0c8" stroke="#7f868e" stroke-width="0.5"/></svg>
<span class="t" style="left:47.70px;top:502px;font-size:12px;line-height:18px;color:#1a1a1a;transform:scaleX(1.0482);">Компьютер</span>
<svg style="left:28px;top:528px;" width="5" height="8" viewBox="0 0 5 8"><path d="M0.5 0.5 L4.5 4 L0.5 7.5Z" fill="none" stroke="#dadada" stroke-width="0.9"/></svg>
<svg style="left:37.0px;top:524.0px;" width="17" height="16" viewBox="0 0 17 16"><rect x="3" y="0.5" width="3.6" height="3.6" fill="#1fb3ea"/><rect x="7.2" y="0.5" width="3.6" height="3.6" fill="#1fb3ea"/><rect x="3" y="4.7" width="3.6" height="3.6" fill="#1fb3ea"/><rect x="7.2" y="4.7" width="3.6" height="3.6" fill="#1fb3ea"/><path d="M2.5 9.5 H14 L16 12 V15.2 H0.8 V12Z" fill="#c9ced4" stroke="#666d75" stroke-width="0.8"/><rect x="0.8" y="12" width="15.2" height="3.2" fill="#5e666f"/><rect x="12" y="13" width="2.5" height="1.2" fill="#7fe36a"/></svg>
<span class="t" style="left:57.70px;top:523px;font-size:12px;line-height:18px;color:#1a1a1a;transform:scaleX(1.0047);">Локальный диск (C:)</span>
<svg style="left:28px;top:549px;" width="5" height="8" viewBox="0 0 5 8"><path d="M0.5 0.5 L4.5 4 L0.5 7.5Z" fill="none" stroke="#dadada" stroke-width="0.9"/></svg>
<svg style="left:37.0px;top:547.0px;" width="17" height="12" viewBox="0 0 17 12"><rect x="0.5" y="0.5" width="10.5" height="9" fill="#eef3ea" stroke="#5c6b5a" stroke-width="0.9"/><path d="M2.5 3 H5 M3.8 3 V7.5 M6.5 3 H9 L7 7.5" stroke="#2f6f3a" stroke-width="1" fill="none"/><path d="M9 6 H15.5 V11.5 H2 V9.5 H9Z" fill="#c9ced4" stroke="#666d75" stroke-width="0.8"/><rect x="12.2" y="8.2" width="2.2" height="2" fill="#59c44a"/></svg>
<span class="t" style="left:57.70px;top:544px;font-size:12px;line-height:18px;color:#1a1a1a;transform:scaleX(1.0047);">Локальный диск (D:)</span>
<svg style="left:28px;top:570px;" width="5" height="8" viewBox="0 0 5 8"><path d="M0.5 0.5 L4.5 4 L0.5 7.5Z" fill="none" stroke="#dadada" stroke-width="0.9"/></svg>
<svg style="left:37.0px;top:566.0px;" width="17" height="16" viewBox="0 0 17 16"><ellipse cx="10" cy="5.5" rx="4.3" ry="5" fill="#e9edf1" stroke="#8a9199" stroke-width="0.8"/><circle cx="10" cy="5.5" r="1.3" fill="#fff" stroke="#8a9199" stroke-width="0.6"/><path d="M2.5 8.5 H14 L16 11.5 V15.2 H0.8 V11.5Z" fill="#d9dde2" stroke="#666d75" stroke-width="0.8"/><rect x="0.8" y="11.5" width="15.2" height="3.7" fill="#eef0f2" stroke="#666d75" stroke-width="0.8"/><rect x="12" y="12.8" width="2.5" height="1.3" fill="#59c44a"/><rect x="2.5" y="13" width="7" height="0.9" fill="#7d848c"/></svg>
<span class="t" style="left:57.70px;top:565px;font-size:12px;line-height:18px;color:#1a1a1a;transform:scaleX(0.9827);">CD-дисковод (F:)</span>
<div style="left:8px;top:584.5px;width:255px;height:20px;background:linear-gradient(#dedede,#d5d5d5);border:1px solid #c2c2c2"></div>
<svg style="left:28px;top:591px;" width="5" height="8" viewBox="0 0 5 8"><path d="M0.5 0.5 L4.5 4 L0.5 7.5Z" fill="none" stroke="#dadada" stroke-width="0.9"/></svg>
<svg style="left:37.0px;top:591.0px;" width="17" height="8" viewBox="0 0 17 8"><g transform="translate(0,4.5)"><path d="M2.5 0.8 H14.5 L16.3 2.6 V6.8 H0.7 V2.6Z" fill="#9a9fa6" stroke="#3e4349" stroke-width="0.7"/><rect x="0.7" y="2.8" width="15.6" height="4" fill="#23272b"/></g></svg>
<span class="t" style="left:57.70px;top:586px;font-size:12px;line-height:18px;color:#1a1a1a;transform:scaleX(1.0041);">Съемный диск (H:)</span>
<svg style="left:17px;top:635px;" width="6" height="6" viewBox="0 0 6 6"><path d="M5.5 0.5 V5.5 H0.5Z" fill="#c4c4c4"/></svg>
<svg style="left:26.0px;top:628.5px;" width="18" height="17" viewBox="0 0 18 17"><circle cx="6" cy="6" r="5.5" fill="#2f8fdf" stroke="#1b66b0" stroke-width="0.7"/><path d="M3 3.5 C5 2 6.5 4 5.5 5.5 C4.5 7 6.5 8 5 10 C3.5 9.5 1.5 7 3 3.5Z" fill="#5fc04e"/><path d="M8 1.5 C10 2.5 10.5 4.5 9 5 C7.8 4.5 7.5 3 8 1.5Z" fill="#5fc04e"/><rect x="8" y="6.5" width="9.5" height="7.5" fill="#1f3fb0" stroke="#8e959d" stroke-width="1"/><path d="M8.8 7.3 H16.7 V10 C13.5 9.5 11 11.5 8.8 12Z" fill="#3f78e4"/><rect x="11.5" y="14.3" width="2.6" height="1.3" fill="#9aa2ab"/><rect x="9.5" y="15.5" width="6.6" height="1.3" fill="#b9c0c8"/></svg>
<span class="t" style="left:47.70px;top:628px;font-size:12px;line-height:18px;color:#1a1a1a;transform:scaleX(0.9400);">Сеть</span>
<svg style="left:28px;top:654px;" width="5" height="8" viewBox="0 0 5 8"><path d="M0.5 0.5 L4.5 4 L0.5 7.5Z" fill="none" stroke="#dadada" stroke-width="0.9"/></svg>
<svg style="left:37.0px;top:650.0px;" width="17" height="16" viewBox="0 0 17 16"><rect x="0.5" y="3.5" width="3.4" height="11" fill="#d7dbe0" stroke="#70777f" stroke-width="0.8"/><rect x="5.5" y="0.5" width="11" height="9.5" fill="#1f3fb0" stroke="#8e959d" stroke-width="1"/><path d="M6.3 1.3 H15.7 V5 C12 4 9 6.5 6.3 7.5Z" fill="#3f78e4"/><rect x="9.5" y="10.5" width="3" height="2" fill="#9aa2ab"/><rect x="7" y="12.5" width="8" height="1.6" fill="#b9c0c8" stroke="#7f868e" stroke-width="0.5"/></svg>
<span class="t" style="left:57.70px;top:649px;font-size:12px;line-height:18px;color:#1a1a1a;transform:scaleX(0.8750);">BIKERPC</span>
<svg style="left:28px;top:675px;" width="5" height="8" viewBox="0 0 5 8"><path d="M0.5 0.5 L4.5 4 L0.5 7.5Z" fill="none" stroke="#dadada" stroke-width="0.9"/></svg>
<svg style="left:37.0px;top:671.0px;" width="17" height="16" viewBox="0 0 17 16"><rect x="0.5" y="3.5" width="3.4" height="11" fill="#d7dbe0" stroke="#70777f" stroke-width="0.8"/><rect x="5.5" y="0.5" width="11" height="9.5" fill="#1f3fb0" stroke="#8e959d" stroke-width="1"/><path d="M6.3 1.3 H15.7 V5 C12 4 9 6.5 6.3 7.5Z" fill="#3f78e4"/><rect x="9.5" y="10.5" width="3" height="2" fill="#9aa2ab"/><rect x="7" y="12.5" width="8" height="1.6" fill="#b9c0c8" stroke="#7f868e" stroke-width="0.5"/></svg>
<span class="t" style="left:57.70px;top:670px;font-size:12px;line-height:18px;color:#1a1a1a;transform:scaleX(1.0255);">АНЯ-ПК</span>
<div style="left:267px;top:176px;width:592px;height:24px;background:#e9e9e9;border-bottom:1px solid #dcdcdc"></div>
<div style="left:538px;top:176px;width:1px;height:24px;background:#dadada"></div>
<div style="left:658px;top:176px;width:1px;height:24px;background:#dadada"></div>
<div style="left:778px;top:176px;width:1px;height:24px;background:#dadada"></div>
<div style="left:858px;top:176px;width:1px;height:24px;background:#dadada"></div>
<svg style="left:404px;top:178px;" width="8" height="4" viewBox="0 0 8 4"><path d="M0 4 L4 0 L8 4Z" fill="#555"/></svg>
<span class="t" style="left:284.20px;top:180px;font-size:12px;line-height:18px;color:#4c607a;transform:scaleX(1.0310);">Имя</span>
<span class="t" style="left:544.70px;top:180px;font-size:12px;line-height:18px;color:#4c607a;transform:scaleX(0.9881);">Дата изменения</span>
<span class="t" style="left:664.70px;top:180px;font-size:12px;line-height:18px;color:#4c607a;transform:scaleX(1.0792);">Тип</span>
<span class="t" style="left:784.70px;top:180px;font-size:12px;line-height:18px;color:#4c607a;transform:scaleX(0.9964);">Размер</span>
<div style="left:267px;top:200px;width:600px;height:539px;overflow:hidden">
<svg style="left:18px;top:9.0px;" width="16" height="16" viewBox="0 0 16 16"><path d="M1.2 6.6 L15 5.6 L15.2 14 L1.8 15.3Z" fill="#f7f3ee" stroke="#4a4038" stroke-width="1"/><path d="M0.8 6.6 L2 3.4 L14.8 2.6 L15 5.4Z" fill="#2c2723"/><path d="M4 0.9 L5.4 2.2 M7.6 0.4 L9 1.7 M11.2 0 L12.6 1.3" stroke="#2c2723" stroke-width="1.5"/><path d="M4.5 3.4 L5.6 5.8 M8.3 3.1 L9.4 5.5 M12 2.9 L13.1 5.3" stroke="#efefef" stroke-width="1.2"/><text x="2" y="13.9" font-size="8.6" font-weight="bold" fill="#d8602a" transform="rotate(-3 8 10)">3</text><text x="6.2" y="13.9" font-size="8.6" font-weight="bold" fill="#3a72c8" transform="rotate(-3 8 10)">2</text><text x="10.2" y="13.9" font-size="8.6" font-weight="bold" fill="#3f8f35" transform="rotate(-3 8 10)">1</text></svg>
<span class="t" style="left:37.70px;top:9px;font-size:12px;line-height:18px;color:#111;transform:scaleX(0.9051);">2017_1108_143046_075B.MP4</span>
<span class="t" style="left:277.70px;top:9px;font-size:12px;line-height:18px;color:#111;transform:scaleX(0.9251);">08.11.2017 14:33</span>
<span class="t" style="left:397.70px;top:9px;font-size:12px;line-height:18px;color:#111;transform:scaleX(1.0010);">Файл "MP4"</span>
<span class="t" style="left:527.70px;top:9px;font-size:12px;line-height:18px;color:#111;transform:scaleX(0.9192);">222 923 КБ</span>
<svg style="left:18px;top:30.0px;" width="16" height="16" viewBox="0 0 16 16"><path d="M1.2 6.6 L15 5.6 L15.2 14 L1.8 15.3Z" fill="#f7f3ee" stroke="#4a4038" stroke-width="1"/><path d="M0.8 6.6 L2 3.4 L14.8 2.6 L15 5.4Z" fill="#2c2723"/><path d="M4 0.9 L5.4 2.2 M7.6 0.4 L9 1.7 M11.2 0 L12.6 1.3" stroke="#2c2723" stroke-width="1.5"/><path d="M4.5 3.4 L5.6 5.8 M8.3 3.1 L9.4 5.5 M12 2.9 L13.1 5.3" stroke="#efefef" stroke-width="1.2"/><text x="2" y="13.9" font-size="8.6" font-weight="bold" fill="#d8602a" transform="rotate(-3 8 10)">3</text><text x="6.2" y="13.9" font-size="8.6" font-weight="bold" fill="#3a72c8" transform="rotate(-3 8 10)">2</text><text x="10.2" y="13.9" font-size="8.6" font-weight="bold" fill="#3f8f35" transform="rotate(-3 8 10)">1</text></svg>
<span class="t" style="left:37.70px;top:30px;font-size:12px;line-height:18px;color:#111;transform:scaleX(0.9051);">2017_1109_072455_076A.MP4</span>
<span class="t" style="left:277.70px;top:30px;font-size:12px;line-height:18px;color:#111;transform:scaleX(0.9213);">09.11.2017 7:27</span>
<span class="t" style="left:397.70px;top:30px;font-size:12px;line-height:18px;color:#111;transform:scaleX(1.0010);">Файл "MP4"</span>
<span class="t" style="left:527.70px;top:30px;font-size:12px;line-height:18px;color:#111;transform:scaleX(0.9192);">272 051 КБ</span>
<svg style="left:18px;top:51.0px;" width="16" height="16" viewBox="0 0 16 16"><path d="M1.2 6.6 L15 5.6 L15.2 14 L1.8 15.3Z" fill="#f7f3ee" stroke="#4a4038" stroke-width="1"/><path d="M0.8 6.6 L2 3.4 L14.8 2.6 L15 5.4Z" fill="#2c2723"/><path d="M4 0.9 L5.4 2.2 M7.6 0.4 L9 1.7 M11.2 0 L12.6 1.3" stroke="#2c2723" stroke-width="1.5"/><path d="M4.5 3.4 L5.6 5.8 M8.3 3.1 L9.4 5.5 M12 2.9 L13.1 5.3" stroke="#efefef" stroke-width="1.2"/><text x="2" y="13.9" font-size="8.6" font-weight="bold" fill="#d8602a" transform="rotate(-3 8 10)">3</text><text x="6.2" y="13.9" font-size="8.6" font-weight="bold" fill="#3a72c8" transform="rotate(-3 8 10)">2</text><text x="10.2" y="13.9" font-size="8.6" font-weight="bold" fill="#3f8f35" transform="rotate(-3 8 10)">1</text></svg>
<span class="t" style="left:37.70px;top:51px;font-size:12px;line-height:18px;color:#111;transform:scaleX(0.9051);">2017_1109_072455_077B.MP4</span>
<span class="t" style="left:277.70px;top:51px;font-size:12px;line-height:18px;color:#111;transform:scaleX(0.9213);">09.11.2017 7:27</span>
<span class="t" style="left:397.70px;top:51px;font-size:12px;line-height:18px;color:#111;transform:scaleX(1.0010);">Файл "MP4"</span>
<span class="t" style="left:527.70px;top:51px;font-size:12px;line-height:18px;color:#111;transform:scaleX(0.9192);">272 073 КБ</span>
<svg style="left:18px;top:72.0px;" width="16" height="16" viewBox="0 0 16 16"><path d="M1.2 6.6 L15 5.6 L15.2 14 L1.8 15.3Z" fill="#f7f3ee" stroke="#4a4038" stroke-width="1"/><path d="M0.8 6.6 L2 3.4 L14.8 2.6 L15 5.4Z" fill="#2c2723"/><path d="M4 0.9 L5.4 2.2 M7.6 0.4 L9 1.7 M11.2 0 L12.6 1.3" stroke="#2c2723" stroke-width="1.5"/><path d="M4.5 3.4 L5.6 5.8 M8.3 3.1 L9.4 5.5 M12 2.9 L13.1 5.3" stroke="#efefef" stroke-width="1.2"/><text x="2" y="13.9" font-size="8.6" font-weight="bold" fill="#d8602a" transform="rotate(-3 8 10)">3</text><text x="6.2" y="13.9" font-size="8.6" font-weight="bold" fill="#3a72c8" transform="rotate(-3 8 10)">2</text><text x="10.2" y="13.9" font-size="8.6" font-weight="bold" fill="#3f8f35" transform="rotate(-3 8 10)">1</text></svg>
<span class="t" style="left:37.70px;top:72px;font-size:12px;line-height:18px;color:#111;transform:scaleX(0.9051);">2017_1109_072756_078A.MP4</span>
<span class="t" style="left:277.70px;top:72px;font-size:12px;line-height:18px;color:#111;transform:scaleX(0.9213);">09.11.2017 7:30</span>
<span class="t" style="left:397.70px;top:72px;font-size:12px;line-height:18px;color:#111;transform:scaleX(1.0010);">Файл "MP4"</span>
<span class="t" style="left:527.70px;top:72px;font-size:12px;line-height:18px;color:#111;transform:scaleX(0.9192);">272 147 КБ</span>
<svg style="left:18px;top:93.0px;" width="16" height="16" viewBox="0 0 16 16"><path d="M1.2 6.6 L15 5.6 L15.2 14 L1.8 15.3Z" fill="#f7f3ee" stroke="#4a4038" stroke-width="1"/><path d="M0.8 6.6 L2 3.4 L14.8 2.6 L15 5.4Z" fill="#2c2723"/><path d="M4 0.9 L5.4 2.2 M7.6 0.4 L9 1.7 M11.2 0 L12.6 1.3" stroke="#2c2723" stroke-width="1.5"/><path d="M4.5 3.4 L5.6 5.8 M8.3 3.1 L9.4 5.5 M12 2.9 L13.1 5.3" stroke="#efefef" stroke-width="1.2"/><text x="2" y="13.9" font-size="8.6" font-weight="bold" fill="#d8602a" transform="rotate(-3 8 10)">3</text><text x="6.2" y="13.9" font-size="8.6" font-weight="bold" fill="#3a72c8" transform="rotate(-3 8 10)">2</text><text x="10.2" y="13.9" font-size="8.6" font-weight="bold" fill="#3f8f35" transform="rotate(-3 8 10)">1</text></svg>
<span class="t" style="left:37.70px;top:93px;font-size:12px;line-height:18px;color:#111;transform:scaleX(0.9051);">2017_1109_072756_079B.MP4</span>
<span class="t" style="left:277.70px;top:93px;font-size:12px;line-height:18px;color:#111;transform:scaleX(0.9213);">09.11.2017 7:30</span>
<span class="t" style="left:397.70px;top:93px;font-size:12px;line-height:18px;color:#111;transform:scaleX(1.0010);">Файл "MP4"</span>
<span class="t" style="left:527.70px;top:93px;font-size:12px;line-height:18px;color:#111;transform:scaleX(0.9192);">272 144 КБ</span>
<div style="left:14px;top:112px;width:573px;height:21px;background:linear-gradient(#e4e4e4,#d7d7d7);border:1px solid #aaaaaa"></div>
<svg style="left:18px;top:114.0px;" width="16" height="16" viewBox="0 0 16 16"><path d="M1.2 6.6 L15 5.6 L15.2 14 L1.8 15.3Z" fill="#f7f3ee" stroke="#4a4038" stroke-width="1"/><path d="M0.8 6.6 L2 3.4 L14.8 2.6 L15 5.4Z" fill="#2c2723"/><path d="M4 0.9 L5.4 2.2 M7.6 0.4 L9 1.7 M11.2 0 L12.6 1.3" stroke="#2c2723" stroke-width="1.5"/><path d="M4.5 3.4 L5.6 5.8 M8.3 3.1 L9.4 5.5 M12 2.9 L13.1 5.3" stroke="#efefef" stroke-width="1.2"/><text x="2" y="13.9" font-size="8.6" font-weight="bold" fill="#d8602a" transform="rotate(-3 8 10)">3</text><text x="6.2" y="13.9" font-size="8.6" font-weight="bold" fill="#3a72c8" transform="rotate(-3 8 10)">2</text><text x="10.2" y="13.9" font-size="8.6" font-weight="bold" fill="#3f8f35" transform="rotate(-3 8 10)">1</text></svg>
<span class="t" style="left:37.70px;top:114px;font-size:12px;line-height:18px;color:#111;transform:scaleX(0.9051);">2017_1109_073056_080A.MP4</span>
<span class="t" style="left:277.70px;top:114px;font-size:12px;line-height:18px;color:#8a8a8a;transform:scaleX(0.9213);">09.11.2017 7:33</span>
<span class="t" style="left:397.70px;top:114px;font-size:12px;line-height:18px;color:#8a8a8a;transform:scaleX(1.0010);">Файл "MP4"</span>
<span class="t" style="left:527.70px;top:114px;font-size:12px;line-height:18px;color:#8a8a8a;transform:scaleX(0.9326);">272 113 КБ</span>
<svg style="left:18px;top:135.0px;" width="16" height="16" viewBox="0 0 16 16"><path d="M1.2 6.6 L15 5.6 L15.2 14 L1.8 15.3Z" fill="#f7f3ee" stroke="#4a4038" stroke-width="1"/><path d="M0.8 6.6 L2 3.4 L14.8 2.6 L15 5.4Z" fill="#2c2723"/><path d="M4 0.9 L5.4 2.2 M7.6 0.4 L9 1.7 M11.2 0 L12.6 1.3" stroke="#2c2723" stroke-width="1.5"/><path d="M4.5 3.4 L5.6 5.8 M8.3 3.1 L9.4 5.5 M12 2.9 L13.1 5.3" stroke="#efefef" stroke-width="1.2"/><text x="2" y="13.9" font-size="8.6" font-weight="bold" fill="#d8602a" transform="rotate(-3 8 10)">3</text><text x="6.2" y="13.9" font-size="8.6" font-weight="bold" fill="#3a72c8" transform="rotate(-3 8 10)">2</text><text x="10.2" y="13.9" font-size="8.6" font-weight="bold" fill="#3f8f35" transform="rotate(-3 8 10)">1</text></svg>
<span class="t" style="left:37.70px;top:135px;font-size:12px;line-height:18px;color:#111;transform:scaleX(0.9051);">2017_1109_073056_081B.MP4</span>
<span class="t" style="left:277.70px;top:135px;font-size:12px;line-height:18px;color:#111;transform:scaleX(0.9213);">09.11.2017 7:33</span>
<span class="t" style="left:397.70px;top:135px;font-size:12px;line-height:18px;color:#111;transform:scaleX(1.0010);">Файл "MP4"</span>
<span class="t" style="left:527.70px;top:135px;font-size:12px;line-height:18px;color:#111;transform:scaleX(0.9192);">272 058 КБ</span>
<svg style="left:18px;top:156.0px;" width="16" height="16" viewBox="0 0 16 16"><path d="M1.2 6.6 L15 5.6 L15.2 14 L1.8 15.3Z" fill="#f7f3ee" stroke="#4a4038" stroke-width="1"/><path d="M0.8 6.6 L2 3.4 L14.8 2.6 L15 5.4Z" fill="#2c2723"/><path d="M4 0.9 L5.4 2.2 M7.6 0.4 L9 1.7 M11.2 0 L12.6 1.3" stroke="#2c2723" stroke-width="1.5"/><path d="M4.5 3.4 L5.6 5.8 M8.3 3.1 L9.4 5.5 M12 2.9 L13.1 5.3" stroke="#efefef" stroke-width="1.2"/><text x="2" y="13.9" font-size="8.6" font-weight="bold" fill="#d8602a" transform="rotate(-3 8 10)">3</text><text x="6.2" y="13.9" font-size="8.6" font-weight="bold" fill="#3a72c8" transform="rotate(-3 8 10)">2</text><text x="10.2" y="13.9" font-size="8.6" font-weight="bold" fill="#3f8f35" transform="rotate(-3 8 10)">1</text></svg>
<span class="t" style="left:37.70px;top:156px;font-size:12px;line-height:18px;color:#111;transform:scaleX(0.9051);">2017_1109_073356_082A.MP4</span>
<span class="t" style="left:277.70px;top:156px;font-size:12px;line-height:18px;color:#111;transform:scaleX(0.9213);">09.11.2017 7:36</span>
<span class="t" style="left:397.70px;top:156px;font-size:12px;line-height:18px;color:#111;transform:scaleX(1.0010);">Файл "MP4"</span>
<span class="t" style="left:527.70px;top:156px;font-size:12px;line-height:18px;color:#111;transform:scaleX(0.9192);">295 554 КБ</span>
<svg style="left:18px;top:177.0px;" width="16" height="16" viewBox="0 0 16 16"><path d="M1.2 6.6 L15 5.6 L15.2 14 L1.8 15.3Z" fill="#f7f3ee" stroke="#4a4038" stroke-width="1"/><path d="M0.8 6.6 L2 3.4 L14.8 2.6 L15 5.4Z" fill="#2c2723"/><path d="M4 0.9 L5.4 2.2 M7.6 0.4 L9 1.7 M11.2 0 L12.6 1.3" stroke="#2c2723" stroke-width="1.5"/><path d="M4.5 3.4 L5.6 5.8 M8.3 3.1 L9.4 5.5 M12 2.9 L13.1 5.3" stroke="#efefef" stroke-width="1.2"/><text x="2" y="13.9" font-size="8.6" font-weight="bold" fill="#d8602a" transform="rotate(-3 8 10)">3</text><text x="6.2" y="13.9" font-size="8.6" font-weight="bold" fill="#3a72c8" transform="rotate(-3 8 10)">2</text><text x="10.2" y="13.9" font-size="8.6" font-weight="bold" fill="#3f8f35" transform="rotate(-3 8 10)">1</text></svg>
<span class="t" style="left:37.70px;top:177px;font-size:12px;line-height:18px;color:#111;transform:scaleX(0.9051);">2017_1109_073356_083B.MP4</span>
<span class="t" style="left:277.70px;top:177px;font-size:12px;line-height:18px;color:#111;transform:scaleX(0.9213);">09.11.2017 7:36</span>
<span class="t" style="left:397.70px;top:177px;font-size:12px;line-height:18px;color:#111;transform:scaleX(1.0010);">Файл "MP4"</span>
<span class="t" style="left:527.70px;top:177px;font-size:12px;line-height:18px;color:#111;transform:scaleX(0.9192);">272 159 КБ</span>
<svg style="left:18px;top:198.0px;" width="16" height="16" viewBox="0 0 16 16"><path d="M1.2 6.6 L15 5.6 L15.2 14 L1.8 15.3Z" fill="#f7f3ee" stroke="#4a4038" stroke-width="1"/><path d="M0.8 6.6 L2 3.4 L14.8 2.6 L15 5.4Z" fill="#2c2723"/><path d="M4 0.9 L5.4 2.2 M7.6 0.4 L9 1.7 M11.2 0 L12.6 1.3" stroke="#2c2723" stroke-width="1.5"/><path d="M4.5 3.4 L5.6 5.8 M8.3 3.1 L9.4 5.5 M12 2.9 L13.1 5.3" stroke="#efefef" stroke-width="1.2"/><text x="2" y="13.9" font-size="8.6" font-weight="bold" fill="#d8602a" transform="rotate(-3 8 10)">3</text><text x="6.2" y="13.9" font-size="8.6" font-weight="bold" fill="#3a72c8" transform="rotate(-3 8 10)">2</text><text x="10.2" y="13.9" font-size="8.6" font-weight="bold" fill="#3f8f35" transform="rotate(-3 8 10)">1</text></svg>
<span class="t" style="left:37.70px;top:198px;font-size:12px;line-height:18px;color:#111;transform:scaleX(0.9051);">2017_1109_073657_084A.MP4</span>
<span class="t" style="left:277.70px;top:198px;font-size:12px;line-height:18px;color:#111;transform:scaleX(0.9213);">09.11.2017 7:39</span>
<span class="t" style="left:397.70px;top:198px;font-size:12px;line-height:18px;color:#111;transform:scaleX(1.0010);">Файл "MP4"</span>
<span class="t" style="left:527.70px;top:198px;font-size:12px;line-height:18px;color:#111;transform:scaleX(0.9192);">318 361 КБ</span>
<svg style="left:18px;top:219.0px;" width="16" height="16" viewBox="0 0 16 16"><path d="M1.2 6.6 L15 5.6 L15.2 14 L1.8 15.3Z" fill="#f7f3ee" stroke="#4a4038" stroke-width="1"/><path d="M0.8 6.6 L2 3.4 L14.8 2.6 L15 5.4Z" fill="#2c2723"/><path d="M4 0.9 L5.4 2.2 M7.6 0.4 L9 1.7 M11.2 0 L12.6 1.3" stroke="#2c2723" stroke-width="1.5"/><path d="M4.5 3.4 L5.6 5.8 M8.3 3.1 L9.4 5.5 M12 2.9 L13.1 5.3" stroke="#efefef" stroke-width="1.2"/><text x="2" y="13.9" font-size="8.6" font-weight="bold" fill="#d8602a" transform="rotate(-3 8 10)">3</text><text x="6.2" y="13.9" font-size="8.6" font-weight="bold" fill="#3a72c8" transform="rotate(-3 8 10)">2</text><text x="10.2" y="13.9" font-size="8.6" font-weight="bold" fill="#3f8f35" transform="rotate(-3 8 10)">1</text></svg>
<span class="t" style="left:37.70px;top:219px;font-size:12px;line-height:18px;color:#111;transform:scaleX(0.9051);">2017_1109_073657_085B.MP4</span>
<span class="t" style="left:277.70px;top:219px;font-size:12px;line-height:18px;color:#111;transform:scaleX(0.9213);">09.11.2017 7:39</span>
<span class="t" style="left:397.70px;top:219px;font-size:12px;line-height:18px;color:#111;transform:scaleX(1.0010);">Файл "MP4"</span>
<span class="t" style="left:527.70px;top:219px;font-size:12px;line-height:18px;color:#111;transform:scaleX(0.9326);">272 113 КБ</span>
<svg style="left:18px;top:240.0px;" width="16" height="16" viewBox="0 0 16 16"><path d="M1.2 6.6 L15 5.6 L15.2 14 L1.8 15.3Z" fill="#f7f3ee" stroke="#4a4038" stroke-width="1"/><path d="M0.8 6.6 L2 3.4 L14.8 2.6 L15 5.4Z" fill="#2c2723"/><path d="M4 0.9 L5.4 2.2 M7.6 0.4 L9 1.7 M11.2 0 L12.6 1.3" stroke="#2c2723" stroke-width="1.5"/><path d="M4.5 3.4 L5.6 5.8 M8.3 3.1 L9.4 5.5 M12 2.9 L13.1 5.3" stroke="#efefef" stroke-width="1.2"/><text x="2" y="13.9" font-size="8.6" font-weight="bold" fill="#d8602a" transform="rotate(-3 8 10)">3</text><text x="6.2" y="13.9" font-size="8.6" font-weight="bold" fill="#3a72c8" transform="rotate(-3 8 10)">2</text><text x="10.2" y="13.9" font-size="8.6" font-weight="bold" fill="#3f8f35" transform="rotate(-3 8 10)">1</text></svg>
<span class="t" style="left:37.70px;top:240px;font-size:12px;line-height:18px;color:#111;transform:scaleX(0.9051);">2017_1109_073956_086A.MP4</span>
<span class="t" style="left:277.70px;top:240px;font-size:12px;line-height:18px;color:#111;transform:scaleX(0.9213);">09.11.2017 7:42</span>
<span class="t" style="left:397.70px;top:240px;font-size:12px;line-height:18px;color:#111;transform:scaleX(1.0010);">Файл "MP4"</span>
<span class="t" style="left:527.70px;top:240px;font-size:12px;line-height:18px;color:#111;transform:scaleX(0.9192);">388 748 КБ</span>
<svg style="left:18px;top:261.0px;" width="16" height="16" viewBox="0 0 16 16"><path d="M1.2 6.6 L15 5.6 L15.2 14 L1.8 15.3Z" fill="#f7f3ee" stroke="#4a4038" stroke-width="1"/><path d="M0.8 6.6 L2 3.4 L14.8 2.6 L15 5.4Z" fill="#2c2723"/><path d="M4 0.9 L5.4 2.2 M7.6 0.4 L9 1.7 M11.2 0 L12.6 1.3" stroke="#2c2723" stroke-width="1.5"/><path d="M4.5 3.4 L5.6 5.8 M8.3 3.1 L9.4 5.5 M12 2.9 L13.1 5.3" stroke="#efefef" stroke-width="1.2"/><text x="2" y="13.9" font-size="8.6" font-weight="bold" fill="#d8602a" transform="rotate(-3 8 10)">3</text><text x="6.2" y="13.9" font-size="8.6" font-weight="bold" fill="#3a72c8" transform="rotate(-3 8 10)">2</text><text x="10.2" y="13.9" font-size="8.6" font-weight="bold" fill="#3f8f35" transform="rotate(-3 8 10)">1</text></svg>
<span class="t" style="left:37.70px;top:261px;font-size:12px;line-height:18px;color:#111;transform:scaleX(0.9051);">2017_1109_073956_087B.MP4</span>
<span class="t" style="left:277.70px;top:261px;font-size:12px;line-height:18px;color:#111;transform:scaleX(0.9213);">09.11.2017 7:42</span>
<span class="t" style="left:397.70px;top:261px;font-size:12px;line-height:18px;color:#111;transform:scaleX(1.0010);">Файл "MP4"</span>
<span class="t" style="left:527.70px;top:261px;font-size:12px;line-height:18px;color:#111;transform:scaleX(0.9192);">272 075 КБ</span>
<svg style="left:18px;top:282.0px;" width="16" height="16" viewBox="0 0 16 16"><path d="M1.2 6.6 L15 5.6 L15.2 14 L1.8 15.3Z" fill="#f7f3ee" stroke="#4a4038" stroke-width="1"/><path d="M0.8 6.6 L2 3.4 L14.8 2.6 L15 5.4Z" fill="#2c2723"/><path d="M4 0.9 L5.4 2.2 M7.6 0.4 L9 1.7 M11.2 0 L12.6 1.3" stroke="#2c2723" stroke-width="1.5"/><path d="M4.5 3.4 L5.6 5.8 M8.3 3.1 L9.4 5.5 M12 2.9 L13.1 5.3" stroke="#efefef" stroke-width="1.2"/><text x="2" y="13.9" font-size="8.6" font-weight="bold" fill="#d8602a" transform="rotate(-3 8 10)">3</text><text x="6.2" y="13.9" font-size="8.6" font-weight="bold" fill="#3a72c8" transform="rotate(-3 8 10)">2</text><text x="10.2" y="13.9" font-size="8.6" font-weight="bold" fill="#3f8f35" transform="rotate(-3 8 10)">1</text></svg>
<span class="t" style="left:37.70px;top:282px;font-size:12px;line-height:18px;color:#111;transform:scaleX(0.9051);">2017_1109_074257_088A.MP4</span>
<span class="t" style="left:277.70px;top:282px;font-size:12px;line-height:18px;color:#111;transform:scaleX(0.9213);">09.11.2017 7:45</span>
<span class="t" style="left:397.70px;top:282px;font-size:12px;line-height:18px;color:#111;transform:scaleX(1.0010);">Файл "MP4"</span>
<span class="t" style="left:527.70px;top:282px;font-size:12px;line-height:18px;color:#111;transform:scaleX(0.9192);">310 546 КБ</span>
<svg style="left:18px;top:303.0px;" width="16" height="16" viewBox="0 0 16 16"><path d="M1.2 6.6 L15 5.6 L15.2 14 L1.8 15.3Z" fill="#f7f3ee" stroke="#4a4038" stroke-width="1"/><path d="M0.8 6.6 L2 3.4 L14.8 2.6 L15 5.4Z" fill="#2c2723"/><path d="M4 0.9 L5.4 2.2 M7.6 0.4 L9 1.7 M11.2 0 L12.6 1.3" stroke="#2c2723" stroke-width="1.5"/><path d="M4.5 3.4 L5.6 5.8 M8.3 3.1 L9.4 5.5 M12 2.9 L13.1 5.3" stroke="#efefef" stroke-width="1.2"/><text x="2" y="13.9" font-size="8.6" font-weight="bold" fill="#d8602a" transform="rotate(-3 8 10)">3</text><text x="6.2" y="13.9" font-size="8.6" font-weight="bold" fill="#3a72c8" transform="rotate(-3 8 10)">2</text><text x="10.2" y="13.9" font-size="8.6" font-weight="bold" fill="#3f8f35" transform="rotate(-3 8 10)">1</text></svg>
<span class="t" style="left:37.70px;top:303px;font-size:12px;line-height:18px;color:#111;transform:scaleX(0.9051);">2017_1109_074257_089B.MP4</span>
<span class="t" style="left:277.70px;top:303px;font-size:12px;line-height:18px;color:#111;transform:scaleX(0.9213);">09.11.2017 7:45</span>
<span class="t" style="left:397.70px;top:303px;font-size:12px;line-height:18px;color:#111;transform:scaleX(1.0010);">Файл "MP4"</span>
<span class="t" style="left:527.70px;top:303px;font-size:12px;line-height:18px;color:#111;transform:scaleX(0.9192);">272 136 КБ</span>
<svg style="left:18px;top:324.0px;" width="16" height="16" viewBox="0 0 16 16"><path d="M1.2 6.6 L15 5.6 L15.2 14 L1.8 15.3Z" fill="#f7f3ee" stroke="#4a4038" stroke-width="1"/><path d="M0.8 6.6 L2 3.4 L14.8 2.6 L15 5.4Z" fill="#2c2723"/><path d="M4 0.9 L5.4 2.2 M7.6 0.4 L9 1.7 M11.2 0 L12.6 1.3" stroke="#2c2723" stroke-width="1.5"/><path d="M4.5 3.4 L5.6 5.8 M8.3 3.1 L9.4 5.5 M12 2.9 L13.1 5.3" stroke="#efefef" stroke-width="1.2"/><text x="2" y="13.9" font-size="8.6" font-weight="bold" fill="#d8602a" transform="rotate(-3 8 10)">3</text><text x="6.2" y="13.9" font-size="8.6" font-weight="bold" fill="#3a72c8" transform="rotate(-3 8 10)">2</text><text x="10.2" y="13.9" font-size="8.6" font-weight="bold" fill="#3f8f35" transform="rotate(-3 8 10)">1</text></svg>
<span class="t" style="left:37.70px;top:324px;font-size:12px;line-height:18px;color:#111;transform:scaleX(0.9051);">2017_1109_074556_090A.MP4</span>
<span class="t" style="left:277.70px;top:324px;font-size:12px;line-height:18px;color:#111;transform:scaleX(0.9213);">09.11.2017 7:48</span>
<span class="t" style="left:397.70px;top:324px;font-size:12px;line-height:18px;color:#111;transform:scaleX(1.0010);">Файл "MP4"</span>
<span class="t" style="left:527.70px;top:324px;font-size:12px;line-height:18px;color:#111;transform:scaleX(0.9192);">286 970 КБ</span>
<svg style="left:18px;top:345.0px;" width="16" height="16" viewBox="0 0 16 16"><path d="M1.2 6.6 L15 5.6 L15.2 14 L1.8 15.3Z" fill="#f7f3ee" stroke="#4a4038" stroke-width="1"/><path d="M0.8 6.6 L2 3.4 L14.8 2.6 L15 5.4Z" fill="#2c2723"/><path d="M4 0.9 L5.4 2.2 M7.6 0.4 L9 1.7 M11.2 0 L12.6 1.3" stroke="#2c2723" stroke-width="1.5"/><path d="M4.5 3.4 L5.6 5.8 M8.3 3.1 L9.4 5.5 M12 2.9 L13.1 5.3" stroke="#efefef" stroke-width="1.2"/><text x="2" y="13.9" font-size="8.6" font-weight="bold" fill="#d8602a" transform="rotate(-3 8 10)">3</text><text x="6.2" y="13.9" font-size="8.6" font-weight="bold" fill="#3a72c8" transform="rotate(-3 8 10)">2</text><text x="10.2" y="13.9" font-size="8.6" font-weight="bold" fill="#3f8f35" transform="rotate(-3 8 10)">1</text></svg>
<span class="t" style="left:37.70px;top:345px;font-size:12px;line-height:18px;color:#111;transform:scaleX(0.9051);">2017_1109_074556_091B.MP4</span>
<span class="t" style="left:277.70px;top:345px;font-size:12px;line-height:18px;color:#111;transform:scaleX(0.9213);">09.11.2017 7:48</span>
<span class="t" style="left:397.70px;top:345px;font-size:12px;line-height:18px;color:#111;transform:scaleX(1.0010);">Файл "MP4"</span>
<span class="t" style="left:527.70px;top:345px;font-size:12px;line-height:18px;color:#111;transform:scaleX(0.9192);">272 073 КБ</span>
<svg style="left:18px;top:366.0px;" width="16" height="16" viewBox="0 0 16 16"><path d="M1.2 6.6 L15 5.6 L15.2 14 L1.8 15.3Z" fill="#f7f3ee" stroke="#4a4038" stroke-width="1"/><path d="M0.8 6.6 L2 3.4 L14.8 2.6 L15 5.4Z" fill="#2c2723"/><path d="M4 0.9 L5.4 2.2 M7.6 0.4 L9 1.7 M11.2 0 L12.6 1.3" stroke="#2c2723" stroke-width="1.5"/><path d="M4.5 3.4 L5.6 5.8 M8.3 3.1 L9.4 5.5 M12 2.9 L13.1 5.3" stroke="#efefef" stroke-width="1.2"/><text x="2" y="13.9" font-size="8.6" font-weight="bold" fill="#d8602a" transform="rotate(-3 8 10)">3</text><text x="6.2" y="13.9" font-size="8.6" font-weight="bold" fill="#3a72c8" transform="rotate(-3 8 10)">2</text><text x="10.2" y="13.9" font-size="8.6" font-weight="bold" fill="#3f8f35" transform="rotate(-3 8 10)">1</text></svg>
<span class="t" style="left:37.70px;top:366px;font-size:12px;line-height:18px;color:#111;transform:scaleX(0.9051);">2017_1109_074856_092A.MP4</span>
<span class="t" style="left:277.70px;top:366px;font-size:12px;line-height:18px;color:#111;transform:scaleX(0.9213);">09.11.2017 7:51</span>
<span class="t" style="left:397.70px;top:366px;font-size:12px;line-height:18px;color:#111;transform:scaleX(1.0010);">Файл "MP4"</span>
<span class="t" style="left:527.70px;top:366px;font-size:12px;line-height:18px;color:#111;transform:scaleX(0.9192);">274 141 КБ</span>
<svg style="left:18px;top:387.0px;" width="16" height="16" viewBox="0 0 16 16"><path d="M1.2 6.6 L15 5.6 L15.2 14 L1.8 15.3Z" fill="#f7f3ee" stroke="#4a4038" stroke-width="1"/><path d="M0.8 6.6 L2 3.4 L14.8 2.6 L15 5.4Z" fill="#2c2723"/><path d="M4 0.9 L5.4 2.2 M7.6 0.4 L9 1.7 M11.2 0 L12.6 1.3" stroke="#2c2723" stroke-width="1.5"/><path d="M4.5 3.4 L5.6 5.8 M8.3 3.1 L9.4 5.5 M12 2.9 L13.1 5.3" stroke="#efefef" stroke-width="1.2"/><text x="2" y="13.9" font-size="8.6" font-weight="bold" fill="#d8602a" transform="rotate(-3 8 10)">3</text><text x="6.2" y="13.9" font-size="8.6" font-weight="bold" fill="#3a72c8" transform="rotate(-3 8 10)">2</text><text x="10.2" y="13.9" font-size="8.6" font-weight="bold" fill="#3f8f35" transform="rotate(-3 8 10)">1</text></svg>
<span class="t" style="left:37.70px;top:387px;font-size:12px;line-height:18px;color:#111;transform:scaleX(0.9051);">2017_1109_074856_093B.MP4</span>
<span class="t" style="left:277.70px;top:387px;font-size:12px;line-height:18px;color:#111;transform:scaleX(0.9213);">09.11.2017 7:51</span>
<span class="t" style="left:397.70px;top:387px;font-size:12px;line-height:18px;color:#111;transform:scaleX(1.0010);">Файл "MP4"</span>
<span class="t" style="left:527.70px;top:387px;font-size:12px;line-height:18px;color:#111;transform:scaleX(0.9192);">272 187 КБ</span>
<svg style="left:18px;top:408.0px;" width="16" height="16" viewBox="0 0 16 16"><path d="M1.2 6.6 L15 5.6 L15.2 14 L1.8 15.3Z" fill="#f7f3ee" stroke="#4a4038" stroke-width="1"/><path d="M0.8 6.6 L2 3.4 L14.8 2.6 L15 5.4Z" fill="#2c2723"/><path d="M4 0.9 L5.4 2.2 M7.6 0.4 L9 1.7 M11.2 0 L12.6 1.3" stroke="#2c2723" stroke-width="1.5"/><path d="M4.5 3.4 L5.6 5.8 M8.3 3.1 L9.4 5.5 M12 2.9 L13.1 5.3" stroke="#efefef" stroke-width="1.2"/><text x="2" y="13.9" font-size="8.6" font-weight="bold" fill="#d8602a" transform="rotate(-3 8 10)">3</text><text x="6.2" y="13.9" font-size="8.6" font-weight="bold" fill="#3a72c8" transform="rotate(-3 8 10)">2</text><text x="10.2" y="13.9" font-size="8.6" font-weight="bold" fill="#3f8f35" transform="rotate(-3 8 10)">1</text></svg>
<span class="t" style="left:37.70px;top:408px;font-size:12px;line-height:18px;color:#111;transform:scaleX(0.9051);">2017_1109_075156_094A.MP4</span>
<span class="t" style="left:277.70px;top:408px;font-size:12px;line-height:18px;color:#111;transform:scaleX(0.9213);">09.11.2017 7:54</span>
<span class="t" style="left:397.70px;top:408px;font-size:12px;line-height:18px;color:#111;transform:scaleX(1.0010);">Файл "MP4"</span>
<span class="t" style="left:527.70px;top:408px;font-size:12px;line-height:18px;color:#111;transform:scaleX(0.9192);">364 386 КБ</span>
<svg style="left:18px;top:429.0px;" width="16" height="16" viewBox="0 0 16 16"><path d="M1.2 6.6 L15 5.6 L15.2 14 L1.8 15.3Z" fill="#f7f3ee" stroke="#4a4038" stroke-width="1"/><path d="M0.8 6.6 L2 3.4 L14.8 2.6 L15 5.4Z" fill="#2c2723"/><path d="M4 0.9 L5.4 2.2 M7.6 0.4 L9 1.7 M11.2 0 L12.6 1.3" stroke="#2c2723" stroke-width="1.5"/><path d="M4.5 3.4 L5.6 5.8 M8.3 3.1 L9.4 5.5 M12 2.9 L13.1 5.3" stroke="#efefef" stroke-width="1.2"/><text x="2" y="13.9" font-size="8.6" font-weight="bold" fill="#d8602a" transform="rotate(-3 8 10)">3</text><text x="6.2" y="13.9" font-size="8.6" font-weight="bold" fill="#3a72c8" transform="rotate(-3 8 10)">2</text><text x="10.2" y="13.9" font-size="8.6" font-weight="bold" fill="#3f8f35" transform="rotate(-3 8 10)">1</text></svg>
<span class="t" style="left:37.70px;top:429px;font-size:12px;line-height:18px;color:#111;transform:scaleX(0.9051);">2017_1109_075156_095B.MP4</span>
<span class="t" style="left:277.70px;top:429px;font-size:12px;line-height:18px;color:#111;transform:scaleX(0.9213);">09.11.2017 7:54</span>
<span class="t" style="left:397.70px;top:429px;font-size:12px;line-height:18px;color:#111;transform:scaleX(1.0010);">Файл "MP4"</span>
<span class="t" style="left:527.70px;top:429px;font-size:12px;line-height:18px;color:#111;transform:scaleX(0.9192);">272 091 КБ</span>
<svg style="left:18px;top:450.0px;" width="16" height="16" viewBox="0 0 16 16"><path d="M1.2 6.6 L15 5.6 L15.2 14 L1.8 15.3Z" fill="#f7f3ee" stroke="#4a4038" stroke-width="1"/><path d="M0.8 6.6 L2 3.4 L14.8 2.6 L15 5.4Z" fill="#2c2723"/><path d="M4 0.9 L5.4 2.2 M7.6 0.4 L9 1.7 M11.2 0 L12.6 1.3" stroke="#2c2723" stroke-width="1.5"/><path d="M4.5 3.4 L5.6 5.8 M8.3 3.1 L9.4 5.5 M12 2.9 L13.1 5.3" stroke="#efefef" stroke-width="1.2"/><text x="2" y="13.9" font-size="8.6" font-weight="bold" fill="#d8602a" transform="rotate(-3 8 10)">3</text><text x="6.2" y="13.9" font-size="8.6" font-weight="bold" fill="#3a72c8" transform="rotate(-3 8 10)">2</text><text x="10.2" y="13.9" font-size="8.6" font-weight="bold" fill="#3f8f35" transform="rotate(-3 8 10)">1</text></svg>
<span class="t" style="left:37.70px;top:450px;font-size:12px;line-height:18px;color:#111;transform:scaleX(0.9051);">2017_1109_075456_096A.MP4</span>
<span class="t" style="left:277.70px;top:450px;font-size:12px;line-height:18px;color:#111;transform:scaleX(0.9213);">09.11.2017 7:57</span>
<span class="t" style="left:397.70px;top:450px;font-size:12px;line-height:18px;color:#111;transform:scaleX(1.0010);">Файл "MP4"</span>
<span class="t" style="left:527.70px;top:450px;font-size:12px;line-height:18px;color:#111;transform:scaleX(0.9192);">286 918 КБ</span>
<svg style="left:18px;top:471.0px;" width="16" height="16" viewBox="0 0 16 16"><path d="M1.2 6.6 L15 5.6 L15.2 14 L1.8 15.3Z" fill="#f7f3ee" stroke="#4a4038" stroke-width="1"/><path d="M0.8 6.6 L2 3.4 L14.8 2.6 L15 5.4Z" fill="#2c2723"/><path d="M4 0.9 L5.4 2.2 M7.6 0.4 L9 1.7 M11.2 0 L12.6 1.3" stroke="#2c2723" stroke-width="1.5"/><path d="M4.5 3.4 L5.6 5.8 M8.3 3.1 L9.4 5.5 M12 2.9 L13.1 5.3" stroke="#efefef" stroke-width="1.2"/><text x="2" y="13.9" font-size="8.6" font-weight="bold" fill="#d8602a" transform="rotate(-3 8 10)">3</text><text x="6.2" y="13.9" font-size="8.6" font-weight="bold" fill="#3a72c8" transform="rotate(-3 8 10)">2</text><text x="10.2" y="13.9" font-size="8.6" font-weight="bold" fill="#3f8f35" transform="rotate(-3 8 10)">1</text></svg>
<span class="t" style="left:37.70px;top:471px;font-size:12px;line-height:18px;color:#111;transform:scaleX(0.9051);">2017_1109_075456_097B.MP4</span>
<span class="t" style="left:277.70px;top:471px;font-size:12px;line-height:18px;color:#111;transform:scaleX(0.9213);">09.11.2017 7:57</span>
<span class="t" style="left:397.70px;top:471px;font-size:12px;line-height:18px;color:#111;transform:scaleX(1.0010);">Файл "MP4"</span>
<span class="t" style="left:527.70px;top:471px;font-size:12px;line-height:18px;color:#111;transform:scaleX(0.9326);">272 113 КБ</span>
<svg style="left:18px;top:492.0px;" width="16" height="16" viewBox="0 0 16 16"><path d="M1.2 6.6 L15 5.6 L15.2 14 L1.8 15.3Z" fill="#f7f3ee" stroke="#4a4038" stroke-width="1"/><path d="M0.8 6.6 L2 3.4 L14.8 2.6 L15 5.4Z" fill="#2c2723"/><path d="M4 0.9 L5.4 2.2 M7.6 0.4 L9 1.7 M11.2 0 L12.6 1.3" stroke="#2c2723" stroke-width="1.5"/><path d="M4.5 3.4 L5.6 5.8 M8.3 3.1 L9.4 5.5 M12 2.9 L13.1 5.3" stroke="#efefef" stroke-width="1.2"/><text x="2" y="13.9" font-size="8.6" font-weight="bold" fill="#d8602a" transform="rotate(-3 8 10)">3</text><text x="6.2" y="13.9" font-size="8.6" font-weight="bold" fill="#3a72c8" transform="rotate(-3 8 10)">2</text><text x="10.2" y="13.9" font-size="8.6" font-weight="bold" fill="#3f8f35" transform="rotate(-3 8 10)">1</text></svg>
<span class="t" style="left:37.70px;top:492px;font-size:12px;line-height:18px;color:#111;transform:scaleX(0.9051);">2017_1109_075756_098A.MP4</span>
<span class="t" style="left:277.70px;top:492px;font-size:12px;line-height:18px;color:#111;transform:scaleX(0.9213);">09.11.2017 8:00</span>
<span class="t" style="left:397.70px;top:492px;font-size:12px;line-height:18px;color:#111;transform:scaleX(1.0010);">Файл "MP4"</span>
<span class="t" style="left:527.70px;top:492px;font-size:12px;line-height:18px;color:#111;transform:scaleX(0.9192);">343 382 КБ</span>
<svg style="left:18px;top:513.0px;" width="16" height="16" viewBox="0 0 16 16"><path d="M1.2 6.6 L15 5.6 L15.2 14 L1.8 15.3Z" fill="#f7f3ee" stroke="#4a4038" stroke-width="1"/><path d="M0.8 6.6 L2 3.4 L14.8 2.6 L15 5.4Z" fill="#2c2723"/><path d="M4 0.9 L5.4 2.2 M7.6 0.4 L9 1.7 M11.2 0 L12.6 1.3" stroke="#2c2723" stroke-width="1.5"/><path d="M4.5 3.4 L5.6 5.8 M8.3 3.1 L9.4 5.5 M12 2.9 L13.1 5.3" stroke="#efefef" stroke-width="1.2"/><text x="2" y="13.9" font-size="8.6" font-weight="bold" fill="#d8602a" transform="rotate(-3 8 10)">3</text><text x="6.2" y="13.9" font-size="8.6" font-weight="bold" fill="#3a72c8" transform="rotate(-3 8 10)">2</text><text x="10.2" y="13.9" font-size="8.6" font-weight="bold" fill="#3f8f35" transform="rotate(-3 8 10)">1</text></svg>
<span class="t" style="left:37.70px;top:513px;font-size:12px;line-height:18px;color:#111;transform:scaleX(0.9051);">2017_1109_075756_099B.MP4</span>
<span class="t" style="left:277.70px;top:513px;font-size:12px;line-height:18px;color:#111;transform:scaleX(0.9213);">09.11.2017 8:00</span>
<span class="t" style="left:397.70px;top:513px;font-size:12px;line-height:18px;color:#111;transform:scaleX(1.0010);">Файл "MP4"</span>
<span class="t" style="left:527.70px;top:513px;font-size:12px;line-height:18px;color:#111;transform:scaleX(0.9192);">272 080 КБ</span>
<svg style="left:18px;top:534.0px;" width="16" height="16" viewBox="0 0 16 16"><path d="M1.2 6.6 L15 5.6 L15.2 14 L1.8 15.3Z" fill="#f7f3ee" stroke="#4a4038" stroke-width="1"/><path d="M0.8 6.6 L2 3.4 L14.8 2.6 L15 5.4Z" fill="#2c2723"/><path d="M4 0.9 L5.4 2.2 M7.6 0.4 L9 1.7 M11.2 0 L12.6 1.3" stroke="#2c2723" stroke-width="1.5"/><path d="M4.5 3.4 L5.6 5.8 M8.3 3.1 L9.4 5.5 M12 2.9 L13.1 5.3" stroke="#efefef" stroke-width="1.2"/><text x="2" y="13.9" font-size="8.6" font-weight="bold" fill="#d8602a" transform="rotate(-3 8 10)">3</text><text x="6.2" y="13.9" font-size="8.6" font-weight="bold" fill="#3a72c8" transform="rotate(-3 8 10)">2</text><text x="10.2" y="13.9" font-size="8.6" font-weight="bold" fill="#3f8f35" transform="rotate(-3 8 10)">1</text></svg>
<span class="t" style="left:37.70px;top:534px;font-size:12px;line-height:18px;color:#111;transform:scaleX(0.9051);">2017_1109_080057_100A.MP4</span>
<span class="t" style="left:277.70px;top:534px;font-size:12px;line-height:18px;color:#111;transform:scaleX(0.9213);">09.11.2017 8:04</span>
<span class="t" style="left:397.70px;top:534px;font-size:12px;line-height:18px;color:#111;transform:scaleX(1.0010);">Файл "MP4"</span>
<span class="t" style="left:527.70px;top:534px;font-size:12px;line-height:18px;color:#111;transform:scaleX(0.9192);">280 193 КБ</span>
</div>
<div style="left:1246px;top:176px;width:8px;height:564px;background:#e4e4e4"></div>
<div style="left:1248px;top:204px;width:6px;height:506px;background:linear-gradient(90deg,#9c9c9c,#c8c8c8)"></div>
<div style="left:1247px;top:185px;width:6.5px;height:123.5px;background:linear-gradient(90deg,#7c7c7c,#8c8c8c)"></div>
<svg style="left:1246px;top:180px;" width="8" height="6" viewBox="0 0 8 6"><path d="M0.8 5 L4 1.5 L7.2 5" fill="none" stroke="#555" stroke-width="1.6"/></svg>
<svg style="left:1246px;top:728px;" width="8" height="6" viewBox="0 0 8 6"><path d="M0.8 1 L4 4.5 L7.2 1" fill="none" stroke="#555" stroke-width="1.6"/></svg>
<span class="t" style="left:20.20px;top:742px;font-size:12px;line-height:18px;color:#cecece;transform:scaleX(0.9864);">Элементов: 111</span>
<div style="left:115px;top:742px;width:1px;height:18px;background:#f2f2f2"></div>
<span class="t" style="left:125.70px;top:742px;font-size:12px;line-height:18px;color:#cecece;transform:scaleX(0.9723);">Выбран 1 элемент: 265 МБ</span>
<div style="left:282px;top:742px;width:1px;height:18px;background:#f2f2f2"></div>
<svg style="left:1206px;top:739px;" width="21" height="21" viewBox="0 0 21 21"><rect x="0" y="0" width="21" height="21" fill="#4d4d4d" stroke="#3a3a3a"/><rect x="4" y="4" width="3" height="3" fill="#fff"/><rect x="9" y="4.8" width="9" height="1.6" fill="#8fa2b5"/><rect x="4" y="9" width="3" height="3" fill="#fff"/><rect x="9" y="9.8" width="9" height="1.6" fill="#8fa2b5"/><rect x="4" y="14" width="3" height="3" fill="#fff"/><rect x="9" y="14.8" width="9" height="1.6" fill="#8fa2b5"/></svg>
<svg style="left:1232px;top:745px;" width="13" height="11" viewBox="0 0 13 11"><rect x="0.5" y="0.5" width="12" height="10" fill="#fff" stroke="#4a90d0"/><rect x="2" y="2" width="9" height="7" fill="#8ecbea"/><path d="M2 7 C5 4.5 8 8 11 5.5 V9 H2Z" fill="#2f5f66"/></svg>
<div style="left:860px;top:200px;width:394px;height:516px;background:transparent;box-shadow:none"></div>
<div style="left:866px;top:204px;width:382px;height:505.5px;background:#000;box-shadow:0 1px 7px 1px rgba(0,0,0,0.32)"></div>
<div style="left:1248px;top:204px;width:6px;height:508px;background:linear-gradient(90deg,#9c9c9c,#c8c8c8)"></div>
<div style="left:1247px;top:185px;width:6.5px;height:123.5px;background:linear-gradient(90deg,#7c7c7c,#8c8c8c)"></div>
<div style="left:867px;top:205px;width:380px;height:5px;background:linear-gradient(#4c4c4c,#333);border-top:1px solid #5c5c5c"></div>
<div style="left:869px;top:230px;width:376px;height:477px;background:#f0f0f0"></div>
<svg style="left:872.5px;top:209.5px;" width="14" height="15" viewBox="0 0 16 16"><path d="M1.2 6.6 L15 5.6 L15.2 14 L1.8 15.3Z" fill="#f7f3ee" stroke="#4a4038" stroke-width="1"/><path d="M0.8 6.6 L2 3.4 L14.8 2.6 L15 5.4Z" fill="#2c2723"/><path d="M4 0.9 L5.4 2.2 M7.6 0.4 L9 1.7 M11.2 0 L12.6 1.3" stroke="#2c2723" stroke-width="1.5"/><path d="M4.5 3.4 L5.6 5.8 M8.3 3.1 L9.4 5.5 M12 2.9 L13.1 5.3" stroke="#efefef" stroke-width="1.2"/><text x="2" y="13.9" font-size="8.6" font-weight="bold" fill="#d8602a" transform="rotate(-3 8 10)">3</text><text x="6.2" y="13.9" font-size="8.6" font-weight="bold" fill="#3a72c8" transform="rotate(-3 8 10)">2</text><text x="10.2" y="13.9" font-size="8.6" font-weight="bold" fill="#3f8f35" transform="rotate(-3 8 10)">1</text></svg>
<div style="left:888px;top:209px;width:326px;height:21px;background:linear-gradient(90deg,rgba(255,255,255,0),rgba(255,255,255,0.22) 10%,rgba(255,255,255,0.27) 50%,rgba(255,255,255,0.22) 90%,rgba(255,255,255,0))"></div>
<span class="t" style="left:922.70px;top:207px;font-size:15px;line-height:21px;color:#fff;transform:scaleX(0.9391);">Свойства: 2017_1109_073056_080A.MP4</span>
<div style="left:1212px;top:205px;width:33px;height:20px;background:#050505;border:1px solid #2a2a2a;border-top:0"></div>
<svg style="left:1226px;top:211px;" width="8" height="7" viewBox="0 0 8 7"><rect x="0" y="0" width="2" height="2" fill="#555"/><rect x="6" y="0" width="2" height="2" fill="#555"/><rect x="3" y="2.5" width="2" height="2" fill="#777"/><rect x="0" y="5" width="2" height="2" fill="#555"/><rect x="6" y="5" width="2" height="2" fill="#555"/></svg>
<div style="left:875px;top:257px;width:362px;height:413px;background:#fff;border:1px solid #acacac"></div>
<div style="left:877px;top:240px;width:49px;height:18px;background:#f0f0f0;border:1px solid #acacac;border-bottom:0"></div>
<span class="t" style="left:882.70px;top:239px;font-size:11.5px;line-height:18px;color:#111;transform:scaleX(1.0072);">Общие</span>
<div style="left:925px;top:237px;width:72px;height:21px;background:#fff;border:1px solid #acacac;border-bottom:0"></div>
<span class="t" style="left:932.70px;top:237px;font-size:11.5px;line-height:18px;color:#111;transform:scaleX(1.0629);">Подробно</span>
<div style="left:890px;top:270px;width:318px;height:358px;background:#fff;border:1px solid #828790"></div>
<div style="left:891px;top:271px;width:306px;height:24px;background:#e6e6e6"></div>
<div style="left:1043px;top:271px;width:1px;height:24px;background:#d2d2d2"></div>
<div style="left:1187px;top:271px;width:1px;height:24px;background:#d2d2d2"></div>
<span class="t" style="left:898.20px;top:275px;font-size:11.5px;line-height:18px;color:#111;transform:scaleX(0.9921);">Свойство</span>
<span class="t" style="left:1049.70px;top:275px;font-size:11.5px;line-height:18px;color:#111;transform:scaleX(1.0314);">Значение</span>
<div style="left:1197px;top:271px;width:10px;height:356px;background:#d4d4d4"></div>
<div style="left:1197px;top:282px;width:8px;height:102px;background:linear-gradient(90deg,#9c9c9c,#b2b2b2)"></div>
<svg style="left:1198px;top:274px;" width="8" height="6" viewBox="0 0 8 6"><path d="M0.8 5 L4 1.5 L7.2 5" fill="none" stroke="#444" stroke-width="1.6"/></svg>
<svg style="left:1198px;top:618px;" width="8" height="6" viewBox="0 0 8 6"><path d="M0.8 1 L4 4.5 L7.2 1" fill="none" stroke="#444" stroke-width="1.6"/></svg>
<span class="t" style="left:904.20px;top:297px;font-size:11.5px;line-height:18px;color:#1e3287;transform:scaleX(1.0506);">Описание</span>
<div style="left:964px;top:306px;width:223px;height:1px;background:#b5c3d6"></div>
<span class="t" style="left:898.20px;top:317px;font-size:11.5px;line-height:18px;color:#111;transform:scaleX(0.9943);">Название</span>
<span class="t" style="left:898.20px;top:335px;font-size:11.5px;line-height:18px;color:#111;transform:scaleX(0.9849);">Субтитры</span>
<span class="t" style="left:898.20px;top:353px;font-size:11.5px;line-height:18px;color:#111;transform:scaleX(1.0190);">Оценка</span>
<svg style="left:1050.5px;top:355px;" width="13" height="13" viewBox="0 0 13 13"><path d="M6.5 1 L8.2 4.9 L12.3 5.2 L9.2 7.9 L10.2 12 L6.5 9.8 L2.8 12 L3.8 7.9 L0.7 5.2 L4.8 4.9Z" fill="#fff" stroke="#aeaeae" stroke-width="1.1" stroke-linejoin="round"/></svg>
<svg style="left:1067.6px;top:355px;" width="13" height="13" viewBox="0 0 13 13"><path d="M6.5 1 L8.2 4.9 L12.3 5.2 L9.2 7.9 L10.2 12 L6.5 9.8 L2.8 12 L3.8 7.9 L0.7 5.2 L4.8 4.9Z" fill="#fff" stroke="#aeaeae" stroke-width="1.1" stroke-linejoin="round"/></svg>
<svg style="left:1084.7px;top:355px;" width="13" height="13" viewBox="0 0 13 13"><path d="M6.5 1 L8.2 4.9 L12.3 5.2 L9.2 7.9 L10.2 12 L6.5 9.8 L2.8 12 L3.8 7.9 L0.7 5.2 L4.8 4.9Z" fill="#fff" stroke="#aeaeae" stroke-width="1.1" stroke-linejoin="round"/></svg>
<svg style="left:1101.8px;top:355px;" width="13" height="13" viewBox="0 0 13 13"><path d="M6.5 1 L8.2 4.9 L12.3 5.2 L9.2 7.9 L10.2 12 L6.5 9.8 L2.8 12 L3.8 7.9 L0.7 5.2 L4.8 4.9Z" fill="#fff" stroke="#aeaeae" stroke-width="1.1" stroke-linejoin="round"/></svg>
<svg style="left:1118.9px;top:355px;" width="13" height="13" viewBox="0 0 13 13"><path d="M6.5 1 L8.2 4.9 L12.3 5.2 L9.2 7.9 L10.2 12 L6.5 9.8 L2.8 12 L3.8 7.9 L0.7 5.2 L4.8 4.9Z" fill="#fff" stroke="#aeaeae" stroke-width="1.1" stroke-linejoin="round"/></svg>
<span class="t" style="left:898.20px;top:371px;font-size:11.5px;line-height:18px;color:#111;transform:scaleX(1.0083);">Теги</span>
<span class="t" style="left:898.20px;top:389px;font-size:11.5px;line-height:18px;color:#111;transform:scaleX(1.0299);">Комментарии</span>
<span class="t" style="left:904.20px;top:411px;font-size:11.5px;line-height:18px;color:#1e3287;transform:scaleX(0.9997);">Видео</span>
<div style="left:942px;top:420.5px;width:245px;height:1px;background:#b5c3d6"></div>
<span class="t" style="left:898.20px;top:431px;font-size:11.5px;line-height:18px;color:#111;transform:scaleX(1.0232);">Продолжительность</span>
<span class="t" style="left:1049.70px;top:431px;font-size:11.5px;line-height:18px;color:#111;transform:scaleX(0.9248);">00:03:01</span>
<span class="t" style="left:898.20px;top:449px;font-size:11.5px;line-height:18px;color:#111;transform:scaleX(1.0350);">Ширина кадра</span>
<span class="t" style="left:1049.70px;top:449px;font-size:11.5px;line-height:18px;color:#111;transform:scaleX(0.9338);">1920</span>
<span class="t" style="left:898.20px;top:467px;font-size:11.5px;line-height:18px;color:#111;transform:scaleX(0.9760);">Высота кадра</span>
<span class="t" style="left:1049.70px;top:467px;font-size:11.5px;line-height:18px;color:#111;transform:scaleX(0.9338);">1080</span>
<span class="t" style="left:898.20px;top:485px;font-size:11.5px;line-height:18px;color:#111;transform:scaleX(1.0016);">Скорость передачи данн...</span>
<span class="t" style="left:1049.70px;top:485px;font-size:11.5px;line-height:18px;color:#111;transform:scaleX(0.9924);">11878 кбит в сек</span>
<span class="t" style="left:898.20px;top:503px;font-size:11.5px;line-height:18px;color:#111;transform:scaleX(1.0189);">Общая скорость потока</span>
<span class="t" style="left:1049.70px;top:503px;font-size:11.5px;line-height:18px;color:#111;transform:scaleX(0.9924);">11974 кбит в сек</span>
<span class="t" style="left:898.20px;top:521px;font-size:11.5px;line-height:18px;color:#111;transform:scaleX(0.9937);">Частота кадров</span>
<span class="t" style="left:1049.70px;top:521px;font-size:11.5px;line-height:18px;color:#111;transform:scaleX(0.9871);">30 кадров в сек</span>
<span class="t" style="left:904.20px;top:542px;font-size:11.5px;line-height:18px;color:#1e3287;transform:scaleX(1.0353);">Аудио</span>
<div style="left:942px;top:551.5px;width:245px;height:1px;background:#b5c3d6"></div>
<span class="t" style="left:898.20px;top:563px;font-size:11.5px;line-height:18px;color:#111;transform:scaleX(1.0356);">Скорость потока</span>
<span class="t" style="left:1049.70px;top:563px;font-size:11.5px;line-height:18px;color:#111;transform:scaleX(0.9952);">95 кбит в сек</span>
<span class="t" style="left:898.20px;top:581px;font-size:11.5px;line-height:18px;color:#111;transform:scaleX(0.9969);">Каналы, количество</span>
<span class="t" style="left:1049.70px;top:581px;font-size:11.5px;line-height:18px;color:#111;transform:scaleX(0.9907);">1 (моно)</span>
<span class="t" style="left:898.20px;top:599px;font-size:11.5px;line-height:18px;color:#111;transform:scaleX(1.0052);">Частота дискретизации</span>
<span class="t" style="left:1049.70px;top:599px;font-size:11.5px;line-height:18px;color:#111;transform:scaleX(0.9721);">32 кГц</span>
<div style="left:891px;top:620px;width:300px;height:7px;overflow:hidden">
<span class="t" style="left:13.20px;top:1px;font-size:11.5px;line-height:18px;color:#1e3287;">Мультимедиа</span>
</div>
<span class="t" style="left:889.70px;top:637px;font-size:11.5px;line-height:18px;color:#2060c0;text-decoration:underline;transform:scaleX(1.0199);">Удаление свойств и личной информации</span>
<div style="left:1003px;top:678px;width:73px;height:21px;background:linear-gradient(#f2f2f2,#e2e2e2);border:1px solid #3c8fe0"></div>
<span class="t" style="left:1032.20px;top:679px;font-size:11.5px;line-height:18px;color:#111;transform:scaleX(0.9383);">OK</span>
<div style="left:1084px;top:678px;width:73px;height:21px;background:linear-gradient(#f2f2f2,#e0e0e0);border:1px solid #adadad"></div>
<span class="t" style="left:1100.20px;top:679px;font-size:11.5px;line-height:18px;color:#111;transform:scaleX(1.0081);">Отмена</span>
<div style="left:1165px;top:678px;width:73px;height:21px;background:#efefef;border:1px solid #d4d4d4"></div>
<span class="t" style="left:1170.70px;top:679px;font-size:11.5px;line-height:18px;color:#9a9a9a;transform:scaleX(1.0451);">Применить</span>
</body></html>
